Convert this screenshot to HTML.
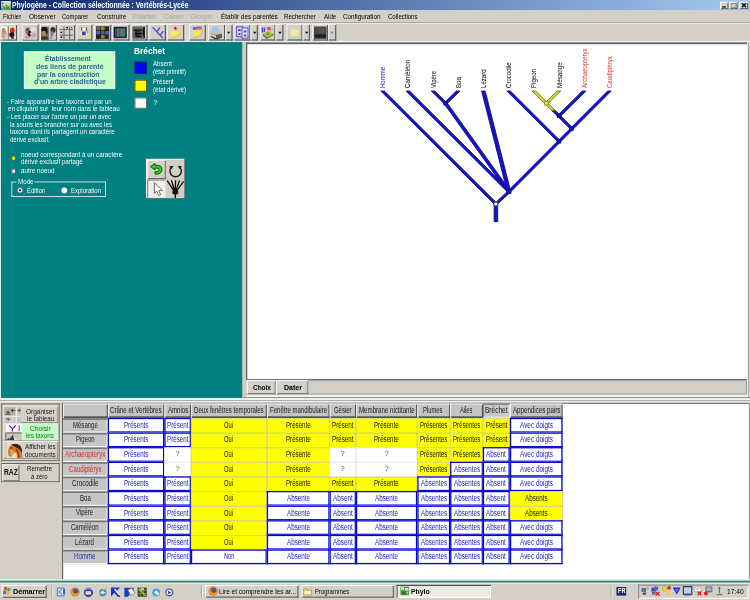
<!DOCTYPE html>
<html><head><meta charset="utf-8"><title>Phylogene</title>
<style>
html,body{margin:0;padding:0;}
body{width:750px;height:600px;overflow:hidden;position:relative;background:#d4d0c8;font-family:"Liberation Sans", sans-serif;}
div,span.t,svg{position:absolute;box-sizing:border-box;}
span.t{white-space:pre;display:block;}
</style></head><body><div id="root" style="left:0;top:0;width:750px;height:600px;will-change:transform;">
<svg style="left:0;top:0" width="0" height="0"><defs><linearGradient id="g0" x1="0" x2="1" y1="0" y2="0"><stop offset="0" stop-color="#0a246a"/><stop offset="1" stop-color="#a6caf0"/></linearGradient></defs></svg>
<svg style="left:0;top:0" width="0" height="0"><defs><filter id="bl" x="-10%" y="-10%" width="120%" height="120%"><feGaussianBlur stdDeviation="0.45"/></filter><filter id="bl2"><feGaussianBlur stdDeviation="0.25"/></filter></defs></svg>
<svg style="left:0;top:0" width="750" height="600" viewBox="0 0 750 600"><rect x="0.00" y="0.00" width="750.00" height="10.20" fill="url(#g0)"/></svg>
<svg style="left:1px;top:0.6px" width="9.8" height="9.6" viewBox="0 0 9.8 9.6"><g filter="url(#bl2)"><rect width="9.8" height="9.6" fill="#b4d4a4"/><rect x="0" y="0" width="9.8" height="2" fill="#d4e4cc"/><rect x="0.8" y="1.4" width="1.6" height="1.4" fill="#6c5c48"/><rect x="3" y="2.6" width="2.4" height="1.6" fill="#e4f0dc"/><rect x="4.6" y="3.6" width="1.6" height="1.6" fill="#7c6c3c"/><rect x="1" y="4.6" width="2.2" height="1.4" fill="#8c9c6c"/><rect x="6" y="2" width="3" height="2" fill="#cce0c0"/><rect x="0" y="6.8" width="9.8" height="2.8" fill="#58b04c"/><rect x="5" y="5.4" width="3.6" height="3" fill="#3c9838"/><rect x="2.6" y="6" width="1.6" height="1.6" fill="#6c6428"/></g></svg>
<span class="t" style="left:11.70px;top:0.58px;font-size:8.2px;line-height:9.84px;color:#fff;font-weight:bold;transform-origin:0 0;transform:scaleX(0.8390);">Phylogène - Collection sélectionnée : Vertébrés-Lycée</span>
<svg style="left:0;top:0" width="750" height="600" viewBox="0 0 750 600"><rect x="720.00" y="1.80" width="8.40" height="7.30" fill="#d4d0c8"/><rect x="727.50" y="1.80" width="0.90" height="7.30" fill="#50504c"/><rect x="720.00" y="8.20" width="8.40" height="0.90" fill="#50504c"/><rect x="720.00" y="1.80" width="0.90" height="7.30" fill="#fbfbf9"/><rect x="720.00" y="1.80" width="8.40" height="0.90" fill="#fbfbf9"/><rect x="729.30" y="1.80" width="8.20" height="7.30" fill="#d4d0c8"/><rect x="736.60" y="1.80" width="0.90" height="7.30" fill="#50504c"/><rect x="729.30" y="8.20" width="8.20" height="0.90" fill="#50504c"/><rect x="729.30" y="1.80" width="0.90" height="7.30" fill="#fbfbf9"/><rect x="729.30" y="1.80" width="8.20" height="0.90" fill="#fbfbf9"/><rect x="739.30" y="1.80" width="8.80" height="7.30" fill="#d4d0c8"/><rect x="747.20" y="1.80" width="0.90" height="7.30" fill="#50504c"/><rect x="739.30" y="8.20" width="8.80" height="0.90" fill="#50504c"/><rect x="739.30" y="1.80" width="0.90" height="7.30" fill="#fbfbf9"/><rect x="739.30" y="1.80" width="8.80" height="0.90" fill="#fbfbf9"/></svg>
<svg style="left:720px;top:1.8px" width="30" height="7.3" viewBox="0 0 30 7.3"><rect x="2.3" y="4.3" width="3.5" height="1.3" fill="#101010"/><rect x="11.4" y="1.5" width="4.6" height="3.9" fill="none" stroke="#8c8a84" stroke-width="0.8"/><rect x="11" y="1.1" width="5.4" height="1" fill="#8c8a84"/><path d="M21.9 1.2 L26.1 5.2 M26.1 1.2 L21.9 5.2" stroke="#080808" stroke-width="1.35"/></svg>
<svg style="left:0;top:0" width="750" height="600" viewBox="0 0 750 600"><rect x="0.00" y="10.20" width="750.00" height="12.30" fill="#d4d0c8"/></svg>
<span class="t" style="left:2.70px;top:12.10px;font-size:8.0px;line-height:9.60px;color:#000;font-weight:normal;transform-origin:0 0;transform:scaleX(0.7578);">Fichier</span>
<span class="t" style="left:28.60px;top:12.10px;font-size:8.0px;line-height:9.60px;color:#000;font-weight:normal;transform-origin:0 0;transform:scaleX(0.8084);">Observer</span>
<span class="t" style="left:62.30px;top:12.10px;font-size:8.0px;line-height:9.60px;color:#000;font-weight:normal;transform-origin:0 0;transform:scaleX(0.7364);">Comparer</span>
<span class="t" style="left:96.60px;top:12.10px;font-size:8.0px;line-height:9.60px;color:#000;font-weight:normal;transform-origin:0 0;transform:scaleX(0.7912);">Construire</span>
<span class="t" style="left:132.70px;top:12.10px;font-size:8.0px;line-height:9.60px;color:#a8a49c;font-weight:normal;transform-origin:0 0;transform:scaleX(0.7474);">Polariser</span>
<span class="t" style="left:164.00px;top:12.10px;font-size:8.0px;line-height:9.60px;color:#a8a49c;font-weight:normal;transform-origin:0 0;transform:scaleX(0.7226);">Classer</span>
<span class="t" style="left:191.00px;top:12.10px;font-size:8.0px;line-height:9.60px;color:#a8a49c;font-weight:normal;transform-origin:0 0;transform:scaleX(0.7425);">Grouper</span>
<span class="t" style="left:220.60px;top:12.10px;font-size:8.0px;line-height:9.60px;color:#000;font-weight:normal;transform-origin:0 0;transform:scaleX(0.7982);">Établir des parentés</span>
<span class="t" style="left:284.30px;top:12.10px;font-size:8.0px;line-height:9.60px;color:#000;font-weight:normal;transform-origin:0 0;transform:scaleX(0.7689);">Rechercher</span>
<span class="t" style="left:324.00px;top:12.10px;font-size:8.0px;line-height:9.60px;color:#000;font-weight:normal;transform-origin:0 0;transform:scaleX(0.7618);">Aide</span>
<span class="t" style="left:343.30px;top:12.10px;font-size:8.0px;line-height:9.60px;color:#000;font-weight:normal;transform-origin:0 0;transform:scaleX(0.7879);">Configuration</span>
<span class="t" style="left:388.30px;top:12.10px;font-size:8.0px;line-height:9.60px;color:#000;font-weight:normal;transform-origin:0 0;transform:scaleX(0.7537);">Collections</span>
<svg style="left:0;top:0" width="750" height="600" viewBox="0 0 750 600"><rect x="0.00" y="22.30" width="750.00" height="0.70" fill="#9c988f"/><rect x="0.00" y="23.00" width="750.00" height="0.70" fill="#fff"/><rect x="0.00" y="23.70" width="750.00" height="17.00" fill="#d4d0c8"/><rect x="0.00" y="40.70" width="750.00" height="1.30" fill="#e4f2f0"/><rect x="0.40" y="24.00" width="16.60" height="16.60" fill="#d4d0c8"/><rect x="15.80" y="24.00" width="1.20" height="16.60" fill="#585c62"/><rect x="0.40" y="39.40" width="16.60" height="1.20" fill="#585c62"/><rect x="0.40" y="24.00" width="1.00" height="16.60" fill="#f1f0ec"/><rect x="0.40" y="24.00" width="16.60" height="1.00" fill="#f1f0ec"/></svg>
<svg style="left:0.4px;top:24px" width="16.6" height="16.6" viewBox="0 0 16.6 16.6"><g transform="translate(0,1.1)"><g filter="url(#bl)"><rect x="0.8" y="1.2" width="7" height="13" fill="#efe9e2"/><ellipse cx="4" cy="9.4" rx="2.6" ry="4.6" fill="#bea07c"/><ellipse cx="3.6" cy="5" rx="1.8" ry="2.2" fill="#a8906c"/><ellipse cx="5.4" cy="11.6" rx="1.4" ry="2.4" fill="#d8c4a4"/><rect x="8.8" y="1.2" width="6.8" height="13" fill="#ece6e2"/><ellipse cx="12.4" cy="5.4" rx="2.4" ry="3" fill="#d82c14"/><ellipse cx="11.8" cy="9.6" rx="2.6" ry="2.4" fill="#281014"/><ellipse cx="12.4" cy="12.6" rx="1.6" ry="1.4" fill="#5a3430"/></g><rect x="7.8" y="1.2" width="0.9" height="13.6" fill="#70686a"/></g></svg>
<svg style="left:0;top:0" width="750" height="600" viewBox="0 0 750 600"><rect x="21.80" y="24.00" width="16.80" height="16.60" fill="#d4d0c8"/><rect x="37.40" y="24.00" width="1.20" height="16.60" fill="#585c62"/><rect x="21.80" y="39.40" width="16.80" height="1.20" fill="#585c62"/><rect x="21.80" y="24.00" width="1.00" height="16.60" fill="#f1f0ec"/><rect x="21.80" y="24.00" width="16.80" height="1.00" fill="#f1f0ec"/></svg>
<svg style="left:21.8px;top:24px" width="16.8" height="16.6" viewBox="0 0 16.8 16.6"><g transform="translate(0,1.1)"><g filter="url(#bl)"><rect x="1.6" y="1.2" width="13.6" height="13.4" fill="#d9c8c8"/><ellipse cx="6.4" cy="6" rx="3.2" ry="3.6" fill="#9a7a80"/><ellipse cx="11" cy="4.4" rx="3" ry="2" fill="#e8dcdc"/><ellipse cx="7.4" cy="8.6" rx="1.7" ry="3" fill="#2e1c24"/><ellipse cx="5.4" cy="4.4" rx="1.4" ry="1.4" fill="#5a3c44"/><ellipse cx="11.4" cy="10" rx="3" ry="2.6" fill="#c8acac"/><ellipse cx="5" cy="12" rx="2.4" ry="1.6" fill="#b89ca0"/><circle cx="8.9" cy="8.4" r="0.8" fill="#ffffff"/></g></g></svg>
<svg style="left:0;top:0" width="750" height="600" viewBox="0 0 750 600"><rect x="40.00" y="24.00" width="17.00" height="16.60" fill="#d4d0c8"/><rect x="55.80" y="24.00" width="1.20" height="16.60" fill="#585c62"/><rect x="40.00" y="39.40" width="17.00" height="1.20" fill="#585c62"/><rect x="40.00" y="24.00" width="1.00" height="16.60" fill="#f1f0ec"/><rect x="40.00" y="24.00" width="17.00" height="1.00" fill="#f1f0ec"/></svg>
<svg style="left:40px;top:24px" width="17" height="16.6" viewBox="0 0 17 16.6"><g transform="translate(0,1.1)"><g filter="url(#bl)"><rect x="1.2" y="1.6" width="6.6" height="13" fill="#6a6040"/><ellipse cx="4.4" cy="4.4" rx="3" ry="2.4" fill="#14140c"/><ellipse cx="4.2" cy="8.4" rx="2" ry="2.8" fill="#a89468"/><rect x="1.2" y="11.6" width="6.6" height="3" fill="#3a3420"/><ellipse cx="6.6" cy="6.6" rx="1" ry="2.6" fill="#1c180c"/><rect x="9" y="1.6" width="6.6" height="13" fill="#d4cccc"/><ellipse cx="13" cy="5" rx="2.6" ry="3" fill="#38303c"/><ellipse cx="12" cy="8.6" rx="1.8" ry="2.6" fill="#8c8088"/><ellipse cx="11" cy="12.6" rx="1.6" ry="1.6" fill="#a89ca0"/></g><rect x="7.9" y="1.6" width="0.9" height="13.2" fill="#70686a"/></g></svg>
<svg style="left:0;top:0" width="750" height="600" viewBox="0 0 750 600"><rect x="58.40" y="24.00" width="16.80" height="16.60" fill="#d4d0c8"/><rect x="74.00" y="24.00" width="1.20" height="16.60" fill="#585c62"/><rect x="58.40" y="39.40" width="16.80" height="1.20" fill="#585c62"/><rect x="58.40" y="24.00" width="1.00" height="16.60" fill="#f1f0ec"/><rect x="58.40" y="24.00" width="16.80" height="1.00" fill="#f1f0ec"/></svg>
<svg style="left:58.4px;top:24px" width="16.8" height="16.6" viewBox="0 0 16.8 16.6"><g transform="translate(0,1.1)"><g filter="url(#bl2)"><path d="M6 1.4 V14 M11.6 1.4 V14 M1.6 4.5 H15 M1.6 10.1 H15" stroke="#686868" stroke-width="1" fill="none"/><rect x="2.5" y="6.6" width="1.7" height="1.5" fill="#000"/><rect x="8.4" y="1.8" width="1.6" height="1.5" fill="#000"/><rect x="2.5" y="11.4" width="1.7" height="1.5" fill="#000"/><rect x="13" y="2" width="1.3" height="1.2" fill="#444"/></g></g></svg>
<svg style="left:0;top:0" width="750" height="600" viewBox="0 0 750 600"><rect x="76.40" y="24.00" width="16.00" height="16.60" fill="#d4d0c8"/><rect x="91.20" y="24.00" width="1.20" height="16.60" fill="#585c62"/><rect x="76.40" y="39.40" width="16.00" height="1.20" fill="#585c62"/><rect x="76.40" y="24.00" width="1.00" height="16.60" fill="#f1f0ec"/><rect x="76.40" y="24.00" width="16.00" height="1.00" fill="#f1f0ec"/></svg>
<svg style="left:76.4px;top:24px" width="16" height="16.6" viewBox="0 0 16 16.6"><g transform="translate(0,1.1)"><g filter="url(#bl2)"><path d="M2.8 9 L7 5 L13 7.4 L12.4 10.4 L7.4 13.2 Z" fill="#f2e6a4"/><path d="M2.8 9 L7.4 13.2 L12.4 10.4" stroke="#e0c850" stroke-width="0.8" fill="none"/><rect x="6" y="6.4" width="3.7" height="3.8" fill="#3c3ce4"/><rect x="5.3" y="2" width="0.9" height="3.6" fill="#505050"/><rect x="10" y="2" width="0.9" height="3.6" fill="#505050"/><rect x="6.8" y="3" width="2.4" height="2.4" fill="#fafafa"/><path d="M11 5 Q12.6 7 11.6 9" stroke="#707070" stroke-width="0.7" fill="none"/></g></g></svg>
<svg style="left:0;top:0" width="750" height="600" viewBox="0 0 750 600"><rect x="94.00" y="24.00" width="17.20" height="16.60" fill="#d4d0c8"/><rect x="110.00" y="24.00" width="1.20" height="16.60" fill="#585c62"/><rect x="94.00" y="39.40" width="17.20" height="1.20" fill="#585c62"/><rect x="94.00" y="24.00" width="1.00" height="16.60" fill="#f1f0ec"/><rect x="94.00" y="24.00" width="17.20" height="1.00" fill="#f1f0ec"/></svg>
<svg style="left:94px;top:24px" width="17.2" height="16.6" viewBox="0 0 17.2 16.6"><g transform="translate(0,1.1)"><g filter="url(#bl2)"><rect x="2" y="1.3" width="13.2" height="12.4" fill="#0c0c1c"/><rect x="2.3" y="1.6" width="3.9" height="3.6" fill="#6c5c74"/><rect x="6.8" y="1.6" width="3.9" height="3.6" fill="#90901c"/><rect x="11.3" y="1.6" width="3.6" height="3.6" fill="#34222c"/><rect x="2.3" y="5.8" width="3.9" height="3.6" fill="#5c5ca8"/><rect x="6.8" y="5.8" width="3.9" height="3.6" fill="#565a90"/><rect x="11.3" y="5.8" width="3.6" height="3.6" fill="#66668a"/><rect x="2.3" y="10" width="3.9" height="3.4" fill="#2a1a30"/><rect x="6.8" y="10" width="3.9" height="3.4" fill="#8c8c1c"/><rect x="11.3" y="10" width="3.6" height="3.4" fill="#40284c"/></g></g></svg>
<svg style="left:0;top:0" width="750" height="600" viewBox="0 0 750 600"><rect x="112.40" y="24.00" width="17.20" height="16.60" fill="#d4d0c8"/><rect x="128.40" y="24.00" width="1.20" height="16.60" fill="#585c62"/><rect x="112.40" y="39.40" width="17.20" height="1.20" fill="#585c62"/><rect x="112.40" y="24.00" width="1.00" height="16.60" fill="#f1f0ec"/><rect x="112.40" y="24.00" width="17.20" height="1.00" fill="#f1f0ec"/></svg>
<svg style="left:112.4px;top:24px" width="17.2" height="16.6" viewBox="0 0 17.2 16.6"><g transform="translate(0,1.1)"><g filter="url(#bl2)"><rect x="1.6" y="1.7" width="13.2" height="11.4" fill="#1c2438"/><rect x="4.6" y="3.3" width="2.8" height="8.2" fill="#62728e"/><rect x="7.6" y="3.3" width="5.6" height="8.2" fill="#4c7e5e"/><rect x="3" y="3.3" width="1" height="8.2" fill="#3a4660"/></g></g></svg>
<svg style="left:0;top:0" width="750" height="600" viewBox="0 0 750 600"><rect x="131.20" y="24.00" width="16.40" height="16.60" fill="#d4d0c8"/><rect x="146.40" y="24.00" width="1.20" height="16.60" fill="#585c62"/><rect x="131.20" y="39.40" width="16.40" height="1.20" fill="#585c62"/><rect x="131.20" y="24.00" width="1.00" height="16.60" fill="#f1f0ec"/><rect x="131.20" y="24.00" width="16.40" height="1.00" fill="#f1f0ec"/></svg>
<svg style="left:131.2px;top:24px" width="16.4" height="16.6" viewBox="0 0 16.4 16.6"><g transform="translate(0,1.1)"><g filter="url(#bl2)"><rect x="1.2" y="1.3" width="12.8" height="12.4" fill="#666666"/><path d="M2.6 5 H11.4 M4 8.6 H11 M5 5 V11.6 H10.6" stroke="#0c0c0c" stroke-width="1.2" fill="none"/><ellipse cx="7.4" cy="8.4" rx="2.2" ry="1.8" fill="none" stroke="#0c0c0c" stroke-width="1"/><path d="M12.6 2 Q10.8 7.6 13 13 L13.8 13 L13.8 2 Z" fill="#0c0c0c"/></g></g></svg>
<svg style="left:0;top:0" width="750" height="600" viewBox="0 0 750 600"><rect x="148.60" y="24.00" width="17.40" height="16.60" fill="#d4d0c8"/><rect x="164.80" y="24.00" width="1.20" height="16.60" fill="#585c62"/><rect x="148.60" y="39.40" width="17.40" height="1.20" fill="#585c62"/><rect x="148.60" y="24.00" width="1.00" height="16.60" fill="#f1f0ec"/><rect x="148.60" y="24.00" width="17.40" height="1.00" fill="#f1f0ec"/></svg>
<svg style="left:148.6px;top:24px" width="17.4" height="16.6" viewBox="0 0 17.4 16.6"><g transform="translate(0,1.1)"><g filter="url(#bl2)"><path d="M3.5 2 L13.9 13.2 M8.1 6.6 L11 2.2 M11 10 L14.5 6.2" stroke="#4846dc" stroke-width="1.25" fill="none"/></g></g></svg>
<svg style="left:0;top:0" width="750" height="600" viewBox="0 0 750 600"><rect x="166.80" y="24.00" width="17.40" height="16.60" fill="#d4d0c8"/><rect x="183.00" y="24.00" width="1.20" height="16.60" fill="#585c62"/><rect x="166.80" y="39.40" width="17.40" height="1.20" fill="#585c62"/><rect x="166.80" y="24.00" width="1.00" height="16.60" fill="#f1f0ec"/><rect x="166.80" y="24.00" width="17.40" height="1.00" fill="#f1f0ec"/></svg>
<svg style="left:166.8px;top:24px" width="17.4" height="16.6" viewBox="0 0 17.4 16.6"><g transform="translate(0,1.1)"><g filter="url(#bl)"><path d="M3.4 6.6 L6.4 4.4 L8.4 6.2 L12.6 5.8 L14 4.4 L13.6 8 L11 11 L5 12.4 L3.6 11 Z" fill="#f5e85c"/><path d="M5 12.4 L11 11 L13.6 8" stroke="#c8b030" stroke-width="0.7" fill="none"/><ellipse cx="8.3" cy="3" rx="1.3" ry="1.7" fill="#b02828"/><ellipse cx="8" cy="0.6" rx="1.4" ry="1" fill="#f0b8c8"/><ellipse cx="9" cy="4.2" rx="0.9" ry="0.9" fill="#e05030"/></g></g></svg>
<svg style="left:0;top:0" width="750" height="600" viewBox="0 0 750 600"><rect x="189.10" y="24.00" width="16.80" height="16.60" fill="#d4d0c8"/><rect x="204.70" y="24.00" width="1.20" height="16.60" fill="#585c62"/><rect x="189.10" y="39.40" width="16.80" height="1.20" fill="#585c62"/><rect x="189.10" y="24.00" width="1.00" height="16.60" fill="#f1f0ec"/><rect x="189.10" y="24.00" width="16.80" height="1.00" fill="#f1f0ec"/></svg>
<svg style="left:189.1px;top:24px" width="16.8" height="16.6" viewBox="0 0 16.8 16.6"><g transform="translate(0,1.1)"><g filter="url(#bl)"><path d="M3.8 1.8 L12.6 1.4 L12.8 4.6 L4 5 Z" fill="#5c64e0"/><path d="M7.4 3 L12.6 2.6 L12.8 5.4 L7.8 5.8 Z" fill="#f06868"/><path d="M3.6 5 L7 4.6 L13.8 4.6 L12 10.4 L4.4 12.6 Z" fill="#f6e458"/><path d="M4.4 12.6 L12 10.4 L13.8 4.6" stroke="#b8a028" stroke-width="0.6" fill="none"/></g></g></svg>
<svg style="left:0;top:0" width="750" height="600" viewBox="0 0 750 600"><rect x="207.90" y="24.00" width="17.30" height="16.60" fill="#d4d0c8"/><rect x="224.00" y="24.00" width="1.20" height="16.60" fill="#585c62"/><rect x="207.90" y="39.40" width="17.30" height="1.20" fill="#585c62"/><rect x="207.90" y="24.00" width="1.00" height="16.60" fill="#f1f0ec"/><rect x="207.90" y="24.00" width="17.30" height="1.00" fill="#f1f0ec"/></svg>
<svg style="left:207.9px;top:24px" width="17.3" height="16.6" viewBox="0 0 17.3 16.6"><g transform="translate(0,1.1)"><g filter="url(#bl)"><path d="M4.4 1.8 L9.6 1.6 L11 6.4 L3.6 6.8 Z" fill="#a4c4f0"/><path d="M2.4 7.2 L12 6 L14.6 8.6 L14 11.4 L8 13.8 L2.6 10.8 Z" fill="#c4c4c4"/><path d="M2.6 10.6 L8 13.2 L14.2 10.8 L14 12.4 L8 14.6 L2.8 12 Z" fill="#383838"/><path d="M8 9.6 L14 8.6 L14 11 L8 13.2 Z" fill="#5c5c5c"/><path d="M3.6 8.8 L8 9.8" stroke="#888" stroke-width="0.7" fill="none"/></g></g></svg>
<svg style="left:0;top:0" width="750" height="600" viewBox="0 0 750 600"><rect x="225.20" y="24.00" width="7.40" height="16.60" fill="#d4d0c8"/><rect x="231.40" y="24.00" width="1.20" height="16.60" fill="#585c62"/><rect x="225.20" y="39.40" width="7.40" height="1.20" fill="#585c62"/><rect x="225.20" y="24.00" width="1.00" height="16.60" fill="#f1f0ec"/><rect x="225.20" y="24.00" width="7.40" height="1.00" fill="#f1f0ec"/></svg>
<svg style="left:225.2px;top:24px" width="7.4" height="16.6" viewBox="0 0 7.4 16.6"><path d="M2.0 7.8 h3.4 l-1.7 2.1 z" fill="#000"/></svg>
<svg style="left:0;top:0" width="750" height="600" viewBox="0 0 750 600"><rect x="233.70" y="24.00" width="16.80" height="16.60" fill="#d4d0c8"/><rect x="249.30" y="24.00" width="1.20" height="16.60" fill="#585c62"/><rect x="233.70" y="39.40" width="16.80" height="1.20" fill="#585c62"/><rect x="233.70" y="24.00" width="1.00" height="16.60" fill="#f1f0ec"/><rect x="233.70" y="24.00" width="16.80" height="1.00" fill="#f1f0ec"/></svg>
<svg style="left:233.7px;top:24px" width="16.8" height="16.6" viewBox="0 0 16.8 16.6"><g transform="translate(0,1.1)"><g filter="url(#bl2)"><rect x="2.6" y="1.6" width="6.2" height="10" fill="#dcdcfa" stroke="#5a60ec" stroke-width="1.1"/><rect x="8" y="2.8" width="6" height="10.4" fill="#e4e4fa" stroke="#5a60ec" stroke-width="1.1"/><rect x="4.2" y="4.2" width="2.4" height="1.8" fill="#404040"/><rect x="4.2" y="8" width="2.4" height="1.8" fill="#585858"/><rect x="9.8" y="5.4" width="2.6" height="2" fill="#505850"/><rect x="9.8" y="9.4" width="2.6" height="2" fill="#606860"/></g></g></svg>
<svg style="left:0;top:0" width="750" height="600" viewBox="0 0 750 600"><rect x="250.50" y="24.00" width="7.40" height="16.60" fill="#d4d0c8"/><rect x="256.70" y="24.00" width="1.20" height="16.60" fill="#585c62"/><rect x="250.50" y="39.40" width="7.40" height="1.20" fill="#585c62"/><rect x="250.50" y="24.00" width="1.00" height="16.60" fill="#f1f0ec"/><rect x="250.50" y="24.00" width="7.40" height="1.00" fill="#f1f0ec"/></svg>
<svg style="left:250.5px;top:24px" width="7.4" height="16.6" viewBox="0 0 7.4 16.6"><path d="M2.0 7.8 h3.4 l-1.7 2.1 z" fill="#000"/></svg>
<svg style="left:0;top:0" width="750" height="600" viewBox="0 0 750 600"><rect x="260.00" y="24.00" width="15.50" height="16.60" fill="#d4d0c8"/><rect x="274.30" y="24.00" width="1.20" height="16.60" fill="#585c62"/><rect x="260.00" y="39.40" width="15.50" height="1.20" fill="#585c62"/><rect x="260.00" y="24.00" width="1.00" height="16.60" fill="#f1f0ec"/><rect x="260.00" y="24.00" width="15.50" height="1.00" fill="#f1f0ec"/></svg>
<svg style="left:260px;top:24px" width="15.5" height="16.6" viewBox="0 0 15.5 16.6"><g transform="translate(0,1.1)"><g filter="url(#bl2)"><path d="M3 9 L9.4 5.6 L13.6 8.6 L7 12.4 Z" fill="#c4c044"/><path d="M3 9 L7 12.4 L7 13.8 L3 10.4 Z" fill="#5c5410"/><path d="M7 12.4 L13.6 8.6 L13.6 10 L7 13.8 Z" fill="#7c7418"/><rect x="1.8" y="2.4" width="1.4" height="4.8" fill="#3434d4"/><rect x="3.8" y="2.4" width="1.4" height="4.8" fill="#4c4ce4"/><path d="M6.6 2.2 L10.4 1.6 L11.4 4.8 L7.6 5.4 Z" fill="#e45444"/><rect x="6.2" y="7.4" width="3" height="2.4" fill="#44a444"/><path d="M10.4 3 L13.4 5.6" stroke="#f4a4b4" stroke-width="1.1"/><path d="M11.6 2.4 L13.6 4" stroke="#a0a0f0" stroke-width="0.8"/></g></g></svg>
<svg style="left:0;top:0" width="750" height="600" viewBox="0 0 750 600"><rect x="275.50" y="24.00" width="8.00" height="16.60" fill="#d4d0c8"/><rect x="282.30" y="24.00" width="1.20" height="16.60" fill="#585c62"/><rect x="275.50" y="39.40" width="8.00" height="1.20" fill="#585c62"/><rect x="275.50" y="24.00" width="1.00" height="16.60" fill="#f1f0ec"/><rect x="275.50" y="24.00" width="8.00" height="1.00" fill="#f1f0ec"/></svg>
<svg style="left:275.5px;top:24px" width="8" height="16.6" viewBox="0 0 8 16.6"><path d="M2.3 7.8 h3.4 l-1.7 2.1 z" fill="#000"/></svg>
<svg style="left:0;top:0" width="750" height="600" viewBox="0 0 750 600"><rect x="286.50" y="24.00" width="16.10" height="16.60" fill="#d4d0c8"/><rect x="301.40" y="24.00" width="1.20" height="16.60" fill="#585c62"/><rect x="286.50" y="39.40" width="16.10" height="1.20" fill="#585c62"/><rect x="286.50" y="24.00" width="1.00" height="16.60" fill="#f1f0ec"/><rect x="286.50" y="24.00" width="16.10" height="1.00" fill="#f1f0ec"/></svg>
<svg style="left:286.5px;top:24px" width="16.1" height="16.6" viewBox="0 0 16.1 16.6"><g transform="translate(0,1.1)"><g filter="url(#bl)"><path d="M3.6 5 L7 3.2 L8.8 4.6 L12.6 4.2 L12.8 10.6 L4.2 12 Z" fill="#f2eaa0"/><path d="M4.2 12 L12.8 10.6 L12.6 4.2" stroke="#d4c878" stroke-width="0.6" fill="none"/></g></g></svg>
<svg style="left:0;top:0" width="750" height="600" viewBox="0 0 750 600"><rect x="302.60" y="24.00" width="7.40" height="16.60" fill="#d4d0c8"/><rect x="308.80" y="24.00" width="1.20" height="16.60" fill="#585c62"/><rect x="302.60" y="39.40" width="7.40" height="1.20" fill="#585c62"/><rect x="302.60" y="24.00" width="1.00" height="16.60" fill="#f1f0ec"/><rect x="302.60" y="24.00" width="7.40" height="1.00" fill="#f1f0ec"/></svg>
<svg style="left:302.6px;top:24px" width="7.4" height="16.6" viewBox="0 0 7.4 16.6"><path d="M2.0 7.8 h3.4 l-1.7 2.1 z" fill="#000"/></svg>
<svg style="left:0;top:0" width="750" height="600" viewBox="0 0 750 600"><rect x="312.10" y="24.00" width="16.10" height="16.60" fill="#d4d0c8"/><rect x="327.00" y="24.00" width="1.20" height="16.60" fill="#585c62"/><rect x="312.10" y="39.40" width="16.10" height="1.20" fill="#585c62"/><rect x="312.10" y="24.00" width="1.00" height="16.60" fill="#f1f0ec"/><rect x="312.10" y="24.00" width="16.10" height="1.00" fill="#f1f0ec"/></svg>
<svg style="left:312.1px;top:24px" width="16.1" height="16.6" viewBox="0 0 16.1 16.6"><g transform="translate(0,1.1)"><g filter="url(#bl2)"><rect x="2" y="1.4" width="12.6" height="12.4" fill="#4a4a4a"/><rect x="7" y="3" width="5.4" height="5" fill="#5c5c5c"/><path d="M8 3 V8 M10 3 V8" stroke="#484848" stroke-width="0.6"/><rect x="2.8" y="9.4" width="11" height="3" fill="#141414"/><path d="M3.6 10.9 H13" stroke="#4a4a4a" stroke-width="0.5" stroke-dasharray="1.4 0.8"/></g></g></svg>
<svg style="left:0;top:0" width="750" height="600" viewBox="0 0 750 600"><rect x="328.20" y="24.00" width="8.10" height="16.60" fill="#d4d0c8"/><rect x="335.10" y="24.00" width="1.20" height="16.60" fill="#585c62"/><rect x="328.20" y="39.40" width="8.10" height="1.20" fill="#585c62"/><rect x="328.20" y="24.00" width="1.00" height="16.60" fill="#f1f0ec"/><rect x="328.20" y="24.00" width="8.10" height="1.00" fill="#f1f0ec"/></svg>
<svg style="left:328.2px;top:24px" width="8.1" height="16.6" viewBox="0 0 8.1 16.6"><path d="M2.3499999999999996 7.8 h3.4 l-1.7 2.1 z" fill="#908c84"/></svg>
<svg style="left:0;top:0" width="750" height="600" viewBox="0 0 750 600"><rect x="18.20" y="25.00" width="1.00" height="14.60" fill="#ecebe6"/><rect x="185.20" y="25.00" width="3.20" height="14.80" fill="#dcd9d2"/><rect x="0.00" y="42.00" width="1.00" height="356.00" fill="#d8eeec"/><rect x="1.00" y="42.00" width="241.50" height="355.90" fill="#008080"/><rect x="23.70" y="51.10" width="91.80" height="38.00" fill="#80c0c0"/><rect x="24.20" y="51.60" width="90.80" height="37.00" fill="#c6fcc6"/><rect x="24.20" y="51.60" width="1.00" height="37.00" fill="#e4ffe8"/><rect x="114.00" y="51.60" width="1.00" height="37.00" fill="#e4ffe8"/><rect x="24.20" y="51.60" width="90.80" height="1.00" fill="#e4ffe8"/><rect x="24.20" y="87.60" width="90.80" height="1.00" fill="#e4ffe8"/></svg>
<span class="t" style="left:45.20px;top:54.32px;font-size:7.8px;line-height:9.36px;color:#2f6690;font-weight:bold;transform-origin:0 0;transform:scaleX(0.8662);">Établissement</span>
<span class="t" style="left:35.80px;top:62.12px;font-size:7.8px;line-height:9.36px;color:#2f6690;font-weight:bold;transform-origin:0 0;transform:scaleX(0.9017);">des liens de parenté</span>
<span class="t" style="left:37.00px;top:69.62px;font-size:7.8px;line-height:9.36px;color:#2f6690;font-weight:bold;transform-origin:0 0;transform:scaleX(0.8919);">par la construction</span>
<span class="t" style="left:33.60px;top:77.22px;font-size:7.8px;line-height:9.36px;color:#2f6690;font-weight:bold;transform-origin:0 0;transform:scaleX(0.8895);">d'un arbre cladistique</span>
<span class="t" style="left:6.60px;top:97.12px;font-size:7.8px;line-height:9.36px;color:#f4fafa;font-weight:normal;transform-origin:0 0;transform:scaleX(0.7902);">- Faire apparaître les taxons un par un</span>
<span class="t" style="left:8.40px;top:104.22px;font-size:7.8px;line-height:9.36px;color:#f4fafa;font-weight:normal;transform-origin:0 0;transform:scaleX(0.7947);">en cliquant sur  leur nom dans le tableau</span>
<span class="t" style="left:6.60px;top:112.12px;font-size:7.8px;line-height:9.36px;color:#f4fafa;font-weight:normal;transform-origin:0 0;transform:scaleX(0.7949);">- Les placer sur l'arbre un par un avec</span>
<span class="t" style="left:10.00px;top:119.62px;font-size:7.8px;line-height:9.36px;color:#f4fafa;font-weight:normal;transform-origin:0 0;transform:scaleX(0.7924);">la souris les brancher sur ou avec les</span>
<span class="t" style="left:10.00px;top:127.22px;font-size:7.8px;line-height:9.36px;color:#f4fafa;font-weight:normal;transform-origin:0 0;transform:scaleX(0.8033);">taxons dont ils partagent un caractère</span>
<span class="t" style="left:10.00px;top:134.82px;font-size:7.8px;line-height:9.36px;color:#f4fafa;font-weight:normal;transform-origin:0 0;transform:scaleX(0.7716);">dérivé exclusif.</span>
<svg style="left:0;top:0" width="750" height="600" viewBox="0 0 750 600"><rect x="11.40" y="155.80" width="4.60" height="4.80" fill="#f0f000"/><rect x="11.40" y="155.80" width="0.80" height="4.80" fill="#304848"/><rect x="15.20" y="155.80" width="0.80" height="4.80" fill="#304848"/><rect x="11.40" y="155.80" width="4.60" height="0.80" fill="#304848"/><rect x="11.40" y="159.80" width="4.60" height="0.80" fill="#304848"/></svg>
<span class="t" style="left:20.80px;top:149.92px;font-size:7.8px;line-height:9.36px;color:#f4fafa;font-weight:normal;transform-origin:0 0;transform:scaleX(0.8051);">noeud correspondant à un caractère</span>
<span class="t" style="left:20.80px;top:157.22px;font-size:7.8px;line-height:9.36px;color:#f4fafa;font-weight:normal;transform-origin:0 0;transform:scaleX(0.7921);">dérivé exclusif partagé</span>
<svg style="left:0;top:0" width="750" height="600" viewBox="0 0 750 600"><rect x="11.40" y="168.80" width="4.60" height="4.80" fill="#ffffff"/><rect x="11.40" y="168.80" width="0.80" height="4.80" fill="#304848"/><rect x="15.20" y="168.80" width="0.80" height="4.80" fill="#304848"/><rect x="11.40" y="168.80" width="4.60" height="0.80" fill="#304848"/><rect x="11.40" y="172.80" width="4.60" height="0.80" fill="#304848"/></svg>
<span class="t" style="left:20.80px;top:165.92px;font-size:7.8px;line-height:9.36px;color:#f4fafa;font-weight:normal;transform-origin:0 0;transform:scaleX(0.8024);">autre noeud</span>
<svg style="left:0;top:0" width="750" height="600" viewBox="0 0 750 600"><rect x="11.40" y="181.50" width="0.90" height="15.40" fill="#d6ecec"/><rect x="105.10" y="181.50" width="0.90" height="15.40" fill="#d6ecec"/><rect x="11.40" y="181.50" width="94.60" height="0.90" fill="#d6ecec"/><rect x="11.40" y="196.00" width="94.60" height="0.90" fill="#d6ecec"/><rect x="16.60" y="180.00" width="17.60" height="4.00" fill="#008080"/></svg>
<span class="t" style="left:17.60px;top:177.12px;font-size:7.8px;line-height:9.36px;color:#f4fafa;font-weight:normal;transform-origin:0 0;transform:scaleX(0.7994);">Mode</span>
<svg style="left:16px;top:186px" width="60" height="9" viewBox="0 0 60 9"><circle cx="4.1" cy="4.3" r="2.7" fill="#fff" stroke="#506060" stroke-width="0.7"/><circle cx="4.1" cy="4.3" r="1.1" fill="#200000"/><circle cx="48.3" cy="4.4" r="2.8" fill="#fff" stroke="#c8d8d8" stroke-width="0.5"/></svg>
<span class="t" style="left:26.70px;top:185.52px;font-size:7.8px;line-height:9.36px;color:#f4fafa;font-weight:normal;transform-origin:0 0;transform:scaleX(0.7717);">Édition</span>
<span class="t" style="left:70.80px;top:185.52px;font-size:7.8px;line-height:9.36px;color:#f4fafa;font-weight:normal;transform-origin:0 0;transform:scaleX(0.7689);">Exploration</span>
<span class="t" style="left:133.80px;top:46.36px;font-size:8.4px;line-height:10.08px;color:#fff;font-weight:bold;transform-origin:0 0;transform:scaleX(0.9940);">Bréchet</span>
<svg style="left:0;top:0" width="750" height="600" viewBox="0 0 750 600"><rect x="134.60" y="61.80" width="12.40" height="12.20" fill="#0000ff"/><rect x="134.60" y="61.80" width="0.80" height="12.20" fill="#103838"/><rect x="146.20" y="61.80" width="0.80" height="12.20" fill="#103838"/><rect x="134.60" y="61.80" width="12.40" height="0.80" fill="#103838"/><rect x="134.60" y="73.20" width="12.40" height="0.80" fill="#103838"/></svg>
<span class="t" style="left:152.60px;top:59.12px;font-size:7.8px;line-height:9.36px;color:#f4fafa;font-weight:normal;transform-origin:0 0;transform:scaleX(0.7825);">Absent</span>
<span class="t" style="left:152.60px;top:66.92px;font-size:7.8px;line-height:9.36px;color:#f4fafa;font-weight:normal;transform-origin:0 0;transform:scaleX(0.7616);">(état primitif)</span>
<svg style="left:0;top:0" width="750" height="600" viewBox="0 0 750 600"><rect x="134.60" y="79.80" width="12.40" height="11.80" fill="#ffff00"/><rect x="134.60" y="79.80" width="0.80" height="11.80" fill="#304020"/><rect x="146.20" y="79.80" width="0.80" height="11.80" fill="#304020"/><rect x="134.60" y="79.80" width="12.40" height="0.80" fill="#304020"/><rect x="134.60" y="90.80" width="12.40" height="0.80" fill="#304020"/></svg>
<span class="t" style="left:152.60px;top:77.02px;font-size:7.8px;line-height:9.36px;color:#f4fafa;font-weight:normal;transform-origin:0 0;transform:scaleX(0.7740);">Présent</span>
<span class="t" style="left:152.60px;top:84.82px;font-size:7.8px;line-height:9.36px;color:#f4fafa;font-weight:normal;transform-origin:0 0;transform:scaleX(0.7931);">(état dérivé)</span>
<svg style="left:0;top:0" width="750" height="600" viewBox="0 0 750 600"><rect x="134.60" y="97.60" width="12.40" height="11.00" fill="#ffffff"/><rect x="134.60" y="97.60" width="0.80" height="11.00" fill="#305858"/><rect x="146.20" y="97.60" width="0.80" height="11.00" fill="#305858"/><rect x="134.60" y="97.60" width="12.40" height="0.80" fill="#305858"/><rect x="134.60" y="107.80" width="12.40" height="0.80" fill="#305858"/></svg>
<span class="t" style="left:153.20px;top:98.12px;font-size:7.8px;line-height:9.36px;color:#f4fafa;font-weight:normal;transform-origin:0 0;transform:scaleX(1.0000);">?</span>
<svg style="left:0;top:0" width="750" height="600" viewBox="0 0 750 600"><rect x="146.00" y="158.80" width="38.80" height="39.60" fill="#8e8a82"/><rect x="146.00" y="158.80" width="38.00" height="38.80" fill="#f6f6f2"/><rect x="147.00" y="159.80" width="37.00" height="37.80" fill="#d2cec6"/><rect x="147.00" y="159.80" width="18.80" height="19.20" fill="#d4d0c8"/><rect x="164.80" y="159.80" width="1.00" height="19.20" fill="#6c6860"/><rect x="147.00" y="178.00" width="18.80" height="1.00" fill="#6c6860"/><rect x="147.00" y="159.80" width="1.00" height="19.20" fill="#f4f4f0"/><rect x="147.00" y="159.80" width="18.80" height="1.00" fill="#f4f4f0"/><rect x="147.00" y="179.40" width="18.60" height="18.20" fill="#efeeea"/><rect x="147.00" y="179.40" width="1.20" height="18.20" fill="#8a8680"/><rect x="147.00" y="179.40" width="18.60" height="1.20" fill="#8a8680"/></svg>
<svg style="left:146px;top:158.8px" width="39" height="40" viewBox="0 0 39 40"><path d="M4.4 7.6 L9 4.4 L9 6.4 L12.4 6.4 Q16 6.8 16 10 Q16 14.6 11.4 15.2 L9 15.2 L9 12.6 L11.2 12.6 Q13 12.4 13 10.6 Q13 9.2 11.6 9.2 L9 9.2 L9 11 Z" fill="#18d818" stroke="#0a480a" stroke-width="0.9"/><path d="M25.2 8.4 A5.7 5.7 0 1 0 34 8.4" fill="none" stroke="#161616" stroke-width="1.4"/><path d="M23 7.4 L27.4 6.8 L25.8 10 Z M36.2 7.4 L31.8 6.8 L33.4 10 Z" fill="#161616"/><path d="M8.4 23.6 L8.4 34.4 L10.8 32.2 L12.6 36.4 L14.6 35.6 L12.8 31.6 L16.2 31.4 Z" fill="#fff" stroke="#4a4a4a" stroke-width="0.8"/><path d="M21.2 21.6 L28.4 32.6 M25.4 21.2 L28.6 32 M29.6 21.2 L29.2 32 M33.6 21.4 L29.8 32 M37.6 22.4 L30.2 32.6 M29.3 33 L29.3 39" stroke="#0c0c0c" stroke-width="1.3" fill="none"/><ellipse cx="29.3" cy="33.2" rx="3" ry="2.3" fill="#0c0c0c"/></svg>
<svg style="left:0;top:0" width="750" height="600" viewBox="0 0 750 600"><rect x="242.50" y="42.00" width="3.60" height="356.20" fill="#cfccc5"/><rect x="246.00" y="42.40" width="501.00" height="337.00" fill="#ffffff"/><rect x="246.00" y="42.40" width="1.30" height="337.00" fill="#606060"/><rect x="246.00" y="42.40" width="501.00" height="1.80" fill="#646464"/><rect x="246.00" y="379.00" width="501.00" height="1.00" fill="#6e6e6e"/><rect x="246.00" y="380.00" width="501.00" height="14.20" fill="#d4d0c8"/><rect x="247.30" y="380.00" width="499.70" height="1.30" fill="#aaa9a4"/><rect x="246.00" y="393.70" width="501.00" height="1.00" fill="#8c8c88"/><rect x="746.00" y="379.00" width="1.00" height="15.60" fill="#9a9a96"/><rect x="246.00" y="394.70" width="504.00" height="2.40" fill="#f1f1ed"/><rect x="243.00" y="397.10" width="507.00" height="1.00" fill="#8e8e8a"/><rect x="747.00" y="42.40" width="1.70" height="352.40" fill="#ececea"/><rect x="748.55" y="42.40" width="0.90" height="354.80" fill="#6c6c6c"/><rect x="749.40" y="42.40" width="0.60" height="355.00" fill="#e4e4e0"/><rect x="246.80" y="380.00" width="28.80" height="14.00" fill="#d4d0c8"/><rect x="274.60" y="380.00" width="1.00" height="14.00" fill="#808080"/><rect x="246.80" y="393.00" width="28.80" height="1.00" fill="#808080"/><rect x="246.80" y="380.00" width="1.00" height="14.00" fill="#fff"/><rect x="246.80" y="380.00" width="28.80" height="1.00" fill="#fff"/><rect x="276.20" y="380.00" width="32.00" height="14.00" fill="#d4d0c8"/><rect x="307.20" y="380.00" width="1.00" height="14.00" fill="#808080"/><rect x="276.20" y="393.00" width="32.00" height="1.00" fill="#808080"/><rect x="276.20" y="380.00" width="1.00" height="14.00" fill="#fff"/><rect x="276.20" y="380.00" width="32.00" height="1.00" fill="#fff"/></svg>
<span class="t" style="left:252.60px;top:383.30px;font-size:8.0px;line-height:9.60px;color:#000;font-weight:bold;transform-origin:0 0;transform:scaleX(0.8006);">Choix</span>
<span class="t" style="left:283.50px;top:383.30px;font-size:8.0px;line-height:9.60px;color:#000;font-weight:bold;transform-origin:0 0;transform:scaleX(0.8801);">Dater</span>
<svg style="left:0;top:0" width="750" height="600" viewBox="0 0 750 600"><polygon points="380.80,91.00 384.40,91.00 497.70,204.00 494.10,204.00" fill="#1612cc" stroke="#0b0b7c" stroke-width="0.85" stroke-linejoin="miter"/><polygon points="494.10,204.00 497.70,204.00 497.70,221.60 494.10,221.60" fill="#1612cc" stroke="#0b0b7c" stroke-width="0.85" stroke-linejoin="miter"/><polygon points="507.20,191.70 510.80,191.70 497.70,204.00 494.10,204.00" fill="#1612cc" stroke="#0b0b7c" stroke-width="0.85" stroke-linejoin="miter"/><polygon points="406.00,91.00 409.60,91.00 510.80,191.70 507.20,191.70" fill="#1612cc" stroke="#0b0b7c" stroke-width="0.85" stroke-linejoin="miter"/><polygon points="431.20,91.00 434.80,91.00 447.40,103.30 443.80,103.30" fill="#1612cc" stroke="#0b0b7c" stroke-width="0.85" stroke-linejoin="miter"/><polygon points="456.40,91.00 460.00,91.00 447.40,103.30 443.80,103.30" fill="#1612cc" stroke="#0b0b7c" stroke-width="0.85" stroke-linejoin="miter"/><polygon points="443.80,103.30 447.40,103.30 510.80,191.70 507.20,191.70" fill="#1612cc" stroke="#0b0b7c" stroke-width="0.85" stroke-linejoin="miter"/><polygon points="481.60,91.00 485.20,91.00 510.80,191.70 507.20,191.70" fill="#1612cc" stroke="#0b0b7c" stroke-width="0.85" stroke-linejoin="miter"/><polygon points="607.60,91.00 611.20,91.00 510.80,191.70 507.20,191.70" fill="#1612cc" stroke="#0b0b7c" stroke-width="0.85" stroke-linejoin="miter"/><polygon points="506.80,91.00 510.40,91.00 560.80,141.30 557.20,141.30" fill="#1612cc" stroke="#0b0b7c" stroke-width="0.85" stroke-linejoin="miter"/><polygon points="557.20,115.90 560.80,115.90 573.40,128.50 569.80,128.50" fill="#1612cc" stroke="#0b0b7c" stroke-width="0.85" stroke-linejoin="miter"/><polygon points="582.40,91.00 586.00,91.00 560.80,115.90 557.20,115.90" fill="#1612cc" stroke="#0b0b7c" stroke-width="0.85" stroke-linejoin="miter"/><polygon points="551.50,110.20 555.10,110.20 560.80,115.90 557.20,115.90" fill="#1612cc" stroke="#0b0b7c" stroke-width="0.85" stroke-linejoin="miter"/><polygon points="532.05,91.00 535.55,91.00 555.05,110.20 551.55,110.20" fill="#dcdc3c" stroke="#6c6c14" stroke-width="0.9" stroke-linejoin="miter"/><polygon points="557.25,91.00 560.75,91.00 548.15,103.30 544.65,103.30" fill="#dcdc3c" stroke="#6c6c14" stroke-width="0.9" stroke-linejoin="miter"/><rect x="443.80" y="101.50" width="3.6" height="3.6" fill="#1414bc" stroke="#0a0a70" stroke-width="0.7"/><rect x="507.00" y="189.70" width="4" height="4" fill="#1414bc" stroke="#0a0a70" stroke-width="0.7"/><rect x="557.20" y="139.50" width="3.6" height="3.6" fill="#1414bc" stroke="#0a0a70" stroke-width="0.7"/><rect x="569.80" y="126.70" width="3.6" height="3.6" fill="#1414bc" stroke="#0a0a70" stroke-width="0.7"/><rect x="557.20" y="114.10" width="3.6" height="3.6" fill="#1414bc" stroke="#0a0a70" stroke-width="0.7"/><rect x="544.70" y="101.60" width="3.4" height="3.4" fill="#f8f850" stroke="#7c7c18" stroke-width="0.8"/><rect x="494.05" y="202.15" width="3.7" height="3.7" fill="#ffffff" stroke="#30305c" stroke-width="0.85"/></svg>
<span class="t" style="left:383.20px;top:88.10px;font-size:7.6px;line-height:9.12px;color:#2020d0;font-weight:normal;transform-origin:0 0;transform:rotate(-90deg) scaleX(0.7897) translateY(-4.56px);">Homme</span>
<span class="t" style="left:408.40px;top:88.10px;font-size:7.6px;line-height:9.12px;color:#000;font-weight:normal;transform-origin:0 0;transform:rotate(-90deg) scaleX(0.8087) translateY(-4.56px);">Caméléon</span>
<span class="t" style="left:433.60px;top:88.10px;font-size:7.6px;line-height:9.12px;color:#000;font-weight:normal;transform-origin:0 0;transform:rotate(-90deg) scaleX(0.7880) translateY(-4.56px);">Vipère</span>
<span class="t" style="left:458.80px;top:88.10px;font-size:7.6px;line-height:9.12px;color:#000;font-weight:normal;transform-origin:0 0;transform:rotate(-90deg) scaleX(0.8139) translateY(-4.56px);">Boa</span>
<span class="t" style="left:484.00px;top:88.10px;font-size:7.6px;line-height:9.12px;color:#000;font-weight:normal;transform-origin:0 0;transform:rotate(-90deg) scaleX(0.8005) translateY(-4.56px);">Lézard</span>
<span class="t" style="left:509.20px;top:88.10px;font-size:7.6px;line-height:9.12px;color:#000;font-weight:normal;transform-origin:0 0;transform:rotate(-90deg) scaleX(0.7981) translateY(-4.56px);">Crocodile</span>
<span class="t" style="left:534.40px;top:88.10px;font-size:7.6px;line-height:9.12px;color:#000;font-weight:normal;transform-origin:0 0;transform:rotate(-90deg) scaleX(0.8032) translateY(-4.56px);">Pigeon</span>
<span class="t" style="left:559.60px;top:88.10px;font-size:7.6px;line-height:9.12px;color:#000;font-weight:normal;transform-origin:0 0;transform:rotate(-90deg) scaleX(0.8192) translateY(-4.56px);">Mésange</span>
<span class="t" style="left:584.80px;top:88.10px;font-size:7.6px;line-height:9.12px;color:#e43030;font-weight:normal;transform-origin:0 0;transform:rotate(-90deg) scaleX(0.8087) translateY(-4.56px);">Archaeopteryx</span>
<span class="t" style="left:610.00px;top:88.10px;font-size:7.6px;line-height:9.12px;color:#e43030;font-weight:normal;transform-origin:0 0;transform:rotate(-90deg) scaleX(0.7796) translateY(-4.56px);">Caudiptéryx</span>
<svg style="left:0;top:0" width="750" height="600" viewBox="0 0 750 600"><rect x="0.00" y="398.20" width="750.00" height="2.00" fill="#f1f1ed"/><rect x="0.00" y="400.20" width="750.00" height="0.90" fill="#a6a6a2"/><rect x="0.00" y="401.10" width="750.00" height="1.50" fill="#f1f1ed"/><rect x="0.00" y="402.60" width="750.00" height="179.00" fill="#d4d0c8"/><rect x="2.00" y="404.10" width="58.40" height="57.80" fill="#f0f0ec"/><rect x="1.30" y="403.40" width="58.40" height="57.80" fill="#d4d0c8"/><rect x="1.30" y="403.40" width="1.00" height="57.80" fill="#68665f"/><rect x="58.70" y="403.40" width="1.00" height="57.80" fill="#68665f"/><rect x="1.30" y="403.40" width="58.40" height="1.00" fill="#68665f"/><rect x="1.30" y="460.20" width="58.40" height="1.00" fill="#68665f"/><rect x="2.00" y="463.70" width="58.40" height="19.20" fill="#f0f0ec"/><rect x="1.30" y="463.00" width="58.40" height="19.20" fill="#d4d0c8"/><rect x="1.30" y="463.00" width="1.00" height="19.20" fill="#68665f"/><rect x="58.70" y="463.00" width="1.00" height="19.20" fill="#68665f"/><rect x="1.30" y="463.00" width="58.40" height="1.00" fill="#68665f"/><rect x="1.30" y="481.20" width="58.40" height="1.00" fill="#68665f"/><rect x="3.40" y="405.80" width="54.80" height="17.20" fill="#d4d0c8"/><rect x="57.30" y="405.80" width="0.90" height="17.20" fill="#8a8880"/><rect x="3.40" y="422.10" width="54.80" height="0.90" fill="#8a8880"/><rect x="3.40" y="405.80" width="0.80" height="17.20" fill="#f2f2ee"/><rect x="3.40" y="405.80" width="54.80" height="0.80" fill="#f2f2ee"/><rect x="3.40" y="423.50" width="54.80" height="17.00" fill="#d4d0c8"/><rect x="57.30" y="423.50" width="0.90" height="17.00" fill="#8a8880"/><rect x="3.40" y="439.60" width="54.80" height="0.90" fill="#8a8880"/><rect x="3.40" y="423.50" width="0.80" height="17.00" fill="#f2f2ee"/><rect x="3.40" y="423.50" width="54.80" height="0.80" fill="#f2f2ee"/><rect x="3.40" y="441.20" width="54.80" height="17.50" fill="#d4d0c8"/><rect x="57.30" y="441.20" width="0.90" height="17.50" fill="#8a8880"/><rect x="3.40" y="457.80" width="54.80" height="0.90" fill="#8a8880"/><rect x="3.40" y="441.20" width="0.80" height="17.50" fill="#f2f2ee"/><rect x="3.40" y="441.20" width="54.80" height="0.80" fill="#f2f2ee"/></svg>
<svg style="left:4.2px;top:406.6px" width="17.4" height="16" viewBox="0 0 17.4 16"><rect x="0" y="0" width="17.4" height="16" fill="#c6c4be"/><rect x="0" y="0" width="11.6" height="8.8" fill="#b4b2ac"/><path d="M12.3 0 V16 M0 9.3 H17.4" stroke="#f2f2ee" stroke-width="1.1" fill="none"/><path d="M8.6 9.8 V16" stroke="#e8e8e4" stroke-width="0.8"/><path d="M1.8 6.4 L4 3.4 L6.2 6.4 Z" fill="#484848"/><path d="M1.4 7.4 H6.6" stroke="#585858" stroke-width="0.8"/><path d="M6.4 3.4 L9 1.4 V5.4 Z" fill="#484848"/><path d="M8.6 3.4 H11.2" stroke="#484848" stroke-width="0.9"/><path d="M13.4 3.4 H16" stroke="#484848" stroke-width="0.9"/><path d="M17 3.4 L14.8 1.6 V5.2 Z" fill="#484848"/><path d="M2.4 11.6 H6.2 L4.3 14 Z" fill="#505050"/></svg>
<span class="t" style="left:26.00px;top:406.70px;font-size:8.0px;line-height:9.60px;color:#161616;font-weight:normal;transform-origin:0 0;transform:scaleX(0.8142);">Organiser</span>
<span class="t" style="left:26.60px;top:414.30px;font-size:8.0px;line-height:9.60px;color:#161616;font-weight:normal;transform-origin:0 0;transform:scaleX(0.7896);">le tableau</span>
<svg style="left:0;top:0" width="750" height="600" viewBox="0 0 750 600"><rect x="21.70" y="424.00" width="36.40" height="16.10" fill="#c4fcc8"/></svg>
<svg style="left:4.2px;top:424px" width="17.6" height="16.4" viewBox="0 0 17.6 16.4"><rect x="1.8" y="0.3" width="15.8" height="7.6" fill="#fdfdfd"/><path d="M5 1.4 L8.4 4.6 L11.8 1.4 M8.4 4.6 V7.4" stroke="#2424e4" stroke-width="1.2" fill="none"/><path d="M15.2 1.2 V7.2" stroke="#e820e0" stroke-width="1.3"/><rect x="1.8" y="9" width="15.8" height="7.4" fill="#cac6be"/><path d="M1.8 16.4 V9 H17.6" stroke="#5c5c5c" stroke-width="0.9" fill="none"/><path d="M2.6 16 L4.4 14 L5.4 15 L8.8 11 L13.6 16.2 Z" fill="#3c3c3c"/><path d="M9 11.2 L13.4 16 L10.6 16 Z" fill="#f4f4f4"/></svg>
<span class="t" style="left:29.90px;top:424.20px;font-size:8.0px;line-height:9.60px;color:#147414;font-weight:normal;transform-origin:0 0;transform:scaleX(0.8351);">Choisir</span>
<span class="t" style="left:26.40px;top:431.40px;font-size:8.0px;line-height:9.60px;color:#147414;font-weight:normal;transform-origin:0 0;transform:scaleX(0.7716);">les taxons</span>
<svg style="left:6.6px;top:442.4px" width="15.2" height="16.2" viewBox="0 0 15.2 16.2"><g filter="url(#bl2)"><rect width="15.2" height="16.2" fill="#e4dcd0"/><path d="M1.4 7 Q2.6 2.4 7 2 Q12.6 2.4 14.6 7.6 L15.2 16.2 L9.6 16.2 Q10.8 11.6 7.8 10.2 Q5.4 12 3.8 15 L1.4 13.6 Q0.8 10 1.4 7 Z" fill="#cc7c2c"/><path d="M4.4 2.6 Q9.4 0.4 13.4 3.8 Q15.4 6.6 15.2 12 Q13 6.6 9 5.2 Q6.2 4.4 4.4 2.6 Z" fill="#3c220c"/><path d="M3.4 7 Q5.4 8.4 7.2 10 Q5.2 10.8 3.8 13.4 Z" fill="#eaac64"/><path d="M9 7 Q11.6 9.6 11.6 15.6" stroke="#7c3c10" stroke-width="1.2" fill="none"/><circle cx="4.4" cy="6" r="0.8" fill="#1c0c04"/></g></svg>
<span class="t" style="left:24.70px;top:442.00px;font-size:8.0px;line-height:9.60px;color:#161616;font-weight:normal;transform-origin:0 0;transform:scaleX(0.7759);">Afficher les</span>
<span class="t" style="left:24.70px;top:449.60px;font-size:8.0px;line-height:9.60px;color:#161616;font-weight:normal;transform-origin:0 0;transform:scaleX(0.7818);">documents</span>
<svg style="left:0;top:0" width="750" height="600" viewBox="0 0 750 600"><rect x="2.20" y="464.30" width="17.20" height="16.90" fill="#d4d0c8"/><rect x="18.40" y="464.30" width="1.00" height="16.90" fill="#6c6a64"/><rect x="2.20" y="480.20" width="17.20" height="1.00" fill="#6c6a64"/><rect x="2.20" y="464.30" width="1.00" height="16.90" fill="#f6f6f2"/><rect x="2.20" y="464.30" width="17.20" height="1.00" fill="#f6f6f2"/></svg>
<span class="t" style="left:3.80px;top:467.40px;font-size:9px;line-height:10.80px;color:#101010;font-weight:bold;transform-origin:0 0;transform:scaleX(0.7459);">RAZ</span>
<span class="t" style="left:26.60px;top:464.00px;font-size:8.0px;line-height:9.60px;color:#161616;font-weight:normal;transform-origin:0 0;transform:scaleX(0.7658);">Remettre</span>
<span class="t" style="left:30.90px;top:471.50px;font-size:8.0px;line-height:9.60px;color:#161616;font-weight:normal;transform-origin:0 0;transform:scaleX(0.7466);">à zéro</span>
<svg style="left:0;top:0" width="750" height="600" viewBox="0 0 750 600"><rect x="62.00" y="402.80" width="686.60" height="177.00" fill="#ffffff"/><rect x="62.00" y="402.80" width="1.20" height="177.00" fill="#606060"/><rect x="62.00" y="402.80" width="686.60" height="1.00" fill="#606060"/><rect x="749.25" y="402.80" width="0.75" height="177.60" fill="#84847e"/><rect x="63.20" y="403.60" width="44.60" height="14.40" fill="#c3c3c3"/><rect x="106.70" y="403.60" width="1.10" height="14.40" fill="#54544c"/><rect x="63.20" y="416.30" width="44.60" height="1.70" fill="#54544c"/><rect x="63.20" y="403.60" width="0.80" height="14.40" fill="#f6f6f6"/><rect x="63.20" y="403.60" width="44.60" height="1.00" fill="#f6f6f6"/><rect x="108.00" y="403.60" width="56.30" height="14.40" fill="#c3c3c3"/><rect x="163.20" y="403.60" width="1.10" height="14.40" fill="#54544c"/><rect x="108.00" y="416.30" width="56.30" height="1.70" fill="#54544c"/><rect x="108.00" y="403.60" width="0.80" height="14.40" fill="#f6f6f6"/><rect x="108.00" y="403.60" width="56.30" height="1.00" fill="#f6f6f6"/></svg>
<span class="t" style="left:110.25px;top:405.06px;font-size:8.4px;line-height:10.08px;color:#1a1a1a;font-weight:normal;transform-origin:0 0;transform:scaleX(0.7340);">Crâne et Vertèbres</span>
<svg style="left:0;top:0" width="750" height="600" viewBox="0 0 750 600"><rect x="164.60" y="403.60" width="26.40" height="14.40" fill="#c3c3c3"/><rect x="189.90" y="403.60" width="1.10" height="14.40" fill="#54544c"/><rect x="164.60" y="416.30" width="26.40" height="1.70" fill="#54544c"/><rect x="164.60" y="403.60" width="0.80" height="14.40" fill="#f6f6f6"/><rect x="164.60" y="403.60" width="26.40" height="1.00" fill="#f6f6f6"/></svg>
<span class="t" style="left:167.60px;top:405.06px;font-size:8.4px;line-height:10.08px;color:#1a1a1a;font-weight:normal;transform-origin:0 0;transform:scaleX(0.7230);">Amnios</span>
<svg style="left:0;top:0" width="750" height="600" viewBox="0 0 750 600"><rect x="191.20" y="403.60" width="75.60" height="14.40" fill="#c3c3c3"/><rect x="265.70" y="403.60" width="1.10" height="14.40" fill="#54544c"/><rect x="191.20" y="416.30" width="75.60" height="1.70" fill="#54544c"/><rect x="191.20" y="403.60" width="0.80" height="14.40" fill="#f6f6f6"/><rect x="191.20" y="403.60" width="75.60" height="1.00" fill="#f6f6f6"/></svg>
<span class="t" style="left:194.10px;top:405.06px;font-size:8.4px;line-height:10.08px;color:#1a1a1a;font-weight:normal;transform-origin:0 0;transform:scaleX(0.7257);">Deux fenêtres temporales</span>
<svg style="left:0;top:0" width="750" height="600" viewBox="0 0 750 600"><rect x="267.10" y="403.60" width="62.50" height="14.40" fill="#c3c3c3"/><rect x="328.50" y="403.60" width="1.10" height="14.40" fill="#54544c"/><rect x="267.10" y="416.30" width="62.50" height="1.70" fill="#54544c"/><rect x="267.10" y="403.60" width="0.80" height="14.40" fill="#f6f6f6"/><rect x="267.10" y="403.60" width="62.50" height="1.00" fill="#f6f6f6"/></svg>
<span class="t" style="left:269.75px;top:405.06px;font-size:8.4px;line-height:10.08px;color:#1a1a1a;font-weight:normal;transform-origin:0 0;transform:scaleX(0.7201);">Fenêtre mandibulaire</span>
<svg style="left:0;top:0" width="750" height="600" viewBox="0 0 750 600"><rect x="329.80" y="403.60" width="26.20" height="14.40" fill="#c3c3c3"/><rect x="354.90" y="403.60" width="1.10" height="14.40" fill="#54544c"/><rect x="329.80" y="416.30" width="26.20" height="1.70" fill="#54544c"/><rect x="329.80" y="403.60" width="0.80" height="14.40" fill="#f6f6f6"/><rect x="329.80" y="403.60" width="26.20" height="1.00" fill="#f6f6f6"/></svg>
<span class="t" style="left:334.10px;top:405.06px;font-size:8.4px;line-height:10.08px;color:#1a1a1a;font-weight:normal;transform-origin:0 0;transform:scaleX(0.7053);">Gésier</span>
<svg style="left:0;top:0" width="750" height="600" viewBox="0 0 750 600"><rect x="356.20" y="403.60" width="61.00" height="14.40" fill="#c3c3c3"/><rect x="416.10" y="403.60" width="1.10" height="14.40" fill="#54544c"/><rect x="356.20" y="416.30" width="61.00" height="1.70" fill="#54544c"/><rect x="356.20" y="403.60" width="0.80" height="14.40" fill="#f6f6f6"/><rect x="356.20" y="403.60" width="61.00" height="1.00" fill="#f6f6f6"/></svg>
<span class="t" style="left:358.80px;top:405.06px;font-size:8.4px;line-height:10.08px;color:#1a1a1a;font-weight:normal;transform-origin:0 0;transform:scaleX(0.7326);">Membrane nictitante</span>
<svg style="left:0;top:0" width="750" height="600" viewBox="0 0 750 600"><rect x="417.60" y="403.60" width="32.60" height="14.40" fill="#c3c3c3"/><rect x="449.10" y="403.60" width="1.10" height="14.40" fill="#54544c"/><rect x="417.60" y="416.30" width="32.60" height="1.70" fill="#54544c"/><rect x="417.60" y="403.60" width="0.80" height="14.40" fill="#f6f6f6"/><rect x="417.60" y="403.60" width="32.60" height="1.00" fill="#f6f6f6"/></svg>
<span class="t" style="left:423.20px;top:405.06px;font-size:8.4px;line-height:10.08px;color:#1a1a1a;font-weight:normal;transform-origin:0 0;transform:scaleX(0.6944);">Plumes</span>
<svg style="left:0;top:0" width="750" height="600" viewBox="0 0 750 600"><rect x="450.40" y="403.60" width="32.60" height="14.40" fill="#c3c3c3"/><rect x="481.90" y="403.60" width="1.10" height="14.40" fill="#54544c"/><rect x="450.40" y="416.30" width="32.60" height="1.70" fill="#54544c"/><rect x="450.40" y="403.60" width="0.80" height="14.40" fill="#f6f6f6"/><rect x="450.40" y="403.60" width="32.60" height="1.00" fill="#f6f6f6"/></svg>
<span class="t" style="left:459.50px;top:405.06px;font-size:8.4px;line-height:10.08px;color:#1a1a1a;font-weight:normal;transform-origin:0 0;transform:scaleX(0.6830);">Ailes</span>
<svg style="left:0;top:0" width="750" height="600" viewBox="0 0 750 600"><rect x="483.10" y="403.60" width="26.30" height="14.00" fill="#c8c8c8"/><rect x="508.80" y="403.60" width="0.60" height="14.00" fill="#e8e8e8"/><rect x="483.10" y="416.70" width="26.30" height="0.90" fill="#e8e8e8"/><rect x="483.10" y="403.60" width="1.00" height="14.00" fill="#7c7c7c"/><rect x="483.10" y="403.60" width="26.30" height="1.20" fill="#7c7c7c"/></svg>
<span class="t" style="left:484.95px;top:405.06px;font-size:8.4px;line-height:10.08px;color:#1a1a1a;font-weight:normal;transform-origin:0 0;transform:scaleX(0.7827);">Bréchet</span>
<svg style="left:0;top:0" width="750" height="600" viewBox="0 0 750 600"><rect x="510.20" y="403.60" width="52.40" height="14.40" fill="#c3c3c3"/><rect x="561.50" y="403.60" width="1.10" height="14.40" fill="#54544c"/><rect x="510.20" y="416.30" width="52.40" height="1.70" fill="#54544c"/><rect x="510.20" y="403.60" width="0.80" height="14.40" fill="#f6f6f6"/><rect x="510.20" y="403.60" width="52.40" height="1.00" fill="#f6f6f6"/></svg>
<span class="t" style="left:512.60px;top:405.06px;font-size:8.4px;line-height:10.08px;color:#1a1a1a;font-weight:normal;transform-origin:0 0;transform:scaleX(0.7377);">Appendices pairs</span>
<svg style="left:0;top:0" width="750" height="600" viewBox="0 0 750 600"><rect x="63.20" y="418.20" width="44.00" height="14.62" fill="#c5c5c5"/><rect x="106.60" y="418.20" width="0.60" height="14.62" fill="#f0f0f0"/><rect x="63.20" y="431.62" width="44.00" height="1.20" fill="#fdfdfd"/><rect x="63.20" y="418.20" width="44.00" height="1.70" fill="#767676"/></svg>
<span class="t" style="left:72.50px;top:419.76px;font-size:8.4px;line-height:10.08px;color:#202020;font-weight:normal;transform-origin:0 0;transform:scaleX(0.7198);">Mésange</span>
<svg style="left:0;top:0" width="750" height="600" viewBox="0 0 750 600"><rect x="107.70" y="417.85" width="56.60" height="14.82" fill="#ffffff"/><rect x="107.70" y="417.85" width="1.30" height="14.82" fill="#0404cc"/><rect x="163.00" y="417.85" width="1.30" height="14.82" fill="#0404cc"/><rect x="107.70" y="417.85" width="56.60" height="1.30" fill="#0404cc"/><rect x="107.70" y="431.37" width="56.60" height="1.30" fill="#0404cc"/></svg>
<span class="t" style="left:123.85px;top:419.86px;font-size:8.4px;line-height:10.08px;color:#2020c8;font-weight:normal;transform-origin:0 0;transform:scaleX(0.7380);">Présents</span>
<svg style="left:0;top:0" width="750" height="600" viewBox="0 0 750 600"><rect x="164.30" y="417.85" width="26.70" height="14.82" fill="#ffffff"/><rect x="164.30" y="417.85" width="1.30" height="14.82" fill="#0404cc"/><rect x="189.70" y="417.85" width="1.30" height="14.82" fill="#0404cc"/><rect x="164.30" y="417.85" width="26.70" height="1.30" fill="#0404cc"/><rect x="164.30" y="431.37" width="26.70" height="1.30" fill="#0404cc"/></svg>
<span class="t" style="left:167.00px;top:419.86px;font-size:8.4px;line-height:10.08px;color:#2020c8;font-weight:normal;transform-origin:0 0;transform:scaleX(0.7411);">Présent</span>
<svg style="left:0;top:0" width="750" height="600" viewBox="0 0 750 600"><rect x="190.90" y="418.40" width="75.90" height="14.82" fill="#ffff00"/><rect x="190.90" y="418.40" width="0.60" height="14.82" fill="#c4c49c"/><rect x="266.20" y="418.40" width="0.60" height="14.82" fill="#c4c49c"/><rect x="190.90" y="418.40" width="75.90" height="0.60" fill="#c4c49c"/><rect x="190.90" y="432.62" width="75.90" height="0.60" fill="#c4c49c"/></svg>
<span class="t" style="left:224.40px;top:419.86px;font-size:8.4px;line-height:10.08px;color:#101000;font-weight:normal;transform-origin:0 0;transform:scaleX(0.6898);">Oui</span>
<svg style="left:0;top:0" width="750" height="600" viewBox="0 0 750 600"><rect x="266.80" y="418.40" width="62.80" height="14.82" fill="#ffff00"/><rect x="266.80" y="418.40" width="0.60" height="14.82" fill="#c4c49c"/><rect x="329.00" y="418.40" width="0.60" height="14.82" fill="#c4c49c"/><rect x="266.80" y="418.40" width="62.80" height="0.60" fill="#c4c49c"/><rect x="266.80" y="432.62" width="62.80" height="0.60" fill="#c4c49c"/></svg>
<span class="t" style="left:285.95px;top:419.86px;font-size:8.4px;line-height:10.08px;color:#101000;font-weight:normal;transform-origin:0 0;transform:scaleX(0.7336);">Présente</span>
<svg style="left:0;top:0" width="750" height="600" viewBox="0 0 750 600"><rect x="329.50" y="418.40" width="26.50" height="14.82" fill="#ffff00"/><rect x="329.50" y="418.40" width="0.60" height="14.82" fill="#c4c49c"/><rect x="355.40" y="418.40" width="0.60" height="14.82" fill="#c4c49c"/><rect x="329.50" y="418.40" width="26.50" height="0.60" fill="#c4c49c"/><rect x="329.50" y="432.62" width="26.50" height="0.60" fill="#c4c49c"/></svg>
<span class="t" style="left:332.10px;top:419.86px;font-size:8.4px;line-height:10.08px;color:#101000;font-weight:normal;transform-origin:0 0;transform:scaleX(0.7411);">Présent</span>
<svg style="left:0;top:0" width="750" height="600" viewBox="0 0 750 600"><rect x="355.90" y="418.40" width="61.30" height="14.82" fill="#ffff00"/><rect x="355.90" y="418.40" width="0.60" height="14.82" fill="#c4c49c"/><rect x="416.60" y="418.40" width="0.60" height="14.82" fill="#c4c49c"/><rect x="355.90" y="418.40" width="61.30" height="0.60" fill="#c4c49c"/><rect x="355.90" y="432.62" width="61.30" height="0.60" fill="#c4c49c"/></svg>
<span class="t" style="left:374.30px;top:419.86px;font-size:8.4px;line-height:10.08px;color:#101000;font-weight:normal;transform-origin:0 0;transform:scaleX(0.7336);">Présente</span>
<svg style="left:0;top:0" width="750" height="600" viewBox="0 0 750 600"><rect x="417.30" y="418.40" width="32.90" height="14.82" fill="#ffff00"/><rect x="417.30" y="418.40" width="0.60" height="14.82" fill="#c4c49c"/><rect x="449.60" y="418.40" width="0.60" height="14.82" fill="#c4c49c"/><rect x="417.30" y="418.40" width="32.90" height="0.60" fill="#c4c49c"/><rect x="417.30" y="432.62" width="32.90" height="0.60" fill="#c4c49c"/></svg>
<span class="t" style="left:420.10px;top:419.86px;font-size:8.4px;line-height:10.08px;color:#101000;font-weight:normal;transform-origin:0 0;transform:scaleX(0.7264);">Présentes</span>
<svg style="left:0;top:0" width="750" height="600" viewBox="0 0 750 600"><rect x="450.10" y="418.40" width="32.90" height="14.82" fill="#ffff00"/><rect x="450.10" y="418.40" width="0.60" height="14.82" fill="#c4c49c"/><rect x="482.40" y="418.40" width="0.60" height="14.82" fill="#c4c49c"/><rect x="450.10" y="418.40" width="32.90" height="0.60" fill="#c4c49c"/><rect x="450.10" y="432.62" width="32.90" height="0.60" fill="#c4c49c"/></svg>
<span class="t" style="left:452.90px;top:419.86px;font-size:8.4px;line-height:10.08px;color:#101000;font-weight:normal;transform-origin:0 0;transform:scaleX(0.7264);">Présentes</span>
<svg style="left:0;top:0" width="750" height="600" viewBox="0 0 750 600"><rect x="482.80" y="418.40" width="27.00" height="14.82" fill="#ffff00"/><rect x="482.80" y="418.40" width="0.60" height="14.82" fill="#c4c49c"/><rect x="509.20" y="418.40" width="0.60" height="14.82" fill="#c4c49c"/><rect x="482.80" y="418.40" width="27.00" height="0.60" fill="#c4c49c"/><rect x="482.80" y="432.62" width="27.00" height="0.60" fill="#c4c49c"/></svg>
<span class="t" style="left:485.65px;top:419.86px;font-size:8.4px;line-height:10.08px;color:#101000;font-weight:normal;transform-origin:0 0;transform:scaleX(0.7411);">Présent</span>
<svg style="left:0;top:0" width="750" height="600" viewBox="0 0 750 600"><rect x="509.90" y="417.85" width="52.70" height="14.82" fill="#ffffff"/><rect x="509.90" y="417.85" width="1.30" height="14.82" fill="#0404cc"/><rect x="561.30" y="417.85" width="1.30" height="14.82" fill="#0404cc"/><rect x="509.90" y="417.85" width="52.70" height="1.30" fill="#0404cc"/><rect x="509.90" y="431.37" width="52.70" height="1.30" fill="#0404cc"/></svg>
<span class="t" style="left:519.80px;top:419.86px;font-size:8.4px;line-height:10.08px;color:#2020c8;font-weight:normal;transform-origin:0 0;transform:scaleX(0.7647);">Avec doigts</span>
<svg style="left:0;top:0" width="750" height="600" viewBox="0 0 750 600"><rect x="63.20" y="432.82" width="44.00" height="14.62" fill="#c5c5c5"/><rect x="106.60" y="432.82" width="0.60" height="14.62" fill="#f0f0f0"/><rect x="63.20" y="446.24" width="44.00" height="1.20" fill="#fdfdfd"/><rect x="63.20" y="432.82" width="44.00" height="1.70" fill="#767676"/></svg>
<span class="t" style="left:75.60px;top:434.38px;font-size:8.4px;line-height:10.08px;color:#202020;font-weight:normal;transform-origin:0 0;transform:scaleX(0.7132);">Pigeon</span>
<svg style="left:0;top:0" width="750" height="600" viewBox="0 0 750 600"><rect x="107.70" y="432.47" width="56.60" height="14.82" fill="#ffffff"/><rect x="107.70" y="432.47" width="1.30" height="14.82" fill="#0404cc"/><rect x="163.00" y="432.47" width="1.30" height="14.82" fill="#0404cc"/><rect x="107.70" y="432.47" width="56.60" height="1.30" fill="#0404cc"/><rect x="107.70" y="445.99" width="56.60" height="1.30" fill="#0404cc"/></svg>
<span class="t" style="left:123.85px;top:434.48px;font-size:8.4px;line-height:10.08px;color:#2020c8;font-weight:normal;transform-origin:0 0;transform:scaleX(0.7380);">Présents</span>
<svg style="left:0;top:0" width="750" height="600" viewBox="0 0 750 600"><rect x="164.30" y="432.47" width="26.70" height="14.82" fill="#ffffff"/><rect x="164.30" y="432.47" width="1.30" height="14.82" fill="#0404cc"/><rect x="189.70" y="432.47" width="1.30" height="14.82" fill="#0404cc"/><rect x="164.30" y="432.47" width="26.70" height="1.30" fill="#0404cc"/><rect x="164.30" y="445.99" width="26.70" height="1.30" fill="#0404cc"/></svg>
<span class="t" style="left:167.00px;top:434.48px;font-size:8.4px;line-height:10.08px;color:#2020c8;font-weight:normal;transform-origin:0 0;transform:scaleX(0.7411);">Présent</span>
<svg style="left:0;top:0" width="750" height="600" viewBox="0 0 750 600"><rect x="190.90" y="433.02" width="75.90" height="14.82" fill="#ffff00"/><rect x="190.90" y="433.02" width="0.60" height="14.82" fill="#c4c49c"/><rect x="266.20" y="433.02" width="0.60" height="14.82" fill="#c4c49c"/><rect x="190.90" y="433.02" width="75.90" height="0.60" fill="#c4c49c"/><rect x="190.90" y="447.24" width="75.90" height="0.60" fill="#c4c49c"/></svg>
<span class="t" style="left:224.40px;top:434.48px;font-size:8.4px;line-height:10.08px;color:#101000;font-weight:normal;transform-origin:0 0;transform:scaleX(0.6898);">Oui</span>
<svg style="left:0;top:0" width="750" height="600" viewBox="0 0 750 600"><rect x="266.80" y="433.02" width="62.80" height="14.82" fill="#ffff00"/><rect x="266.80" y="433.02" width="0.60" height="14.82" fill="#c4c49c"/><rect x="329.00" y="433.02" width="0.60" height="14.82" fill="#c4c49c"/><rect x="266.80" y="433.02" width="62.80" height="0.60" fill="#c4c49c"/><rect x="266.80" y="447.24" width="62.80" height="0.60" fill="#c4c49c"/></svg>
<span class="t" style="left:285.95px;top:434.48px;font-size:8.4px;line-height:10.08px;color:#101000;font-weight:normal;transform-origin:0 0;transform:scaleX(0.7336);">Présente</span>
<svg style="left:0;top:0" width="750" height="600" viewBox="0 0 750 600"><rect x="329.50" y="433.02" width="26.50" height="14.82" fill="#ffff00"/><rect x="329.50" y="433.02" width="0.60" height="14.82" fill="#c4c49c"/><rect x="355.40" y="433.02" width="0.60" height="14.82" fill="#c4c49c"/><rect x="329.50" y="433.02" width="26.50" height="0.60" fill="#c4c49c"/><rect x="329.50" y="447.24" width="26.50" height="0.60" fill="#c4c49c"/></svg>
<span class="t" style="left:332.10px;top:434.48px;font-size:8.4px;line-height:10.08px;color:#101000;font-weight:normal;transform-origin:0 0;transform:scaleX(0.7411);">Présent</span>
<svg style="left:0;top:0" width="750" height="600" viewBox="0 0 750 600"><rect x="355.90" y="433.02" width="61.30" height="14.82" fill="#ffff00"/><rect x="355.90" y="433.02" width="0.60" height="14.82" fill="#c4c49c"/><rect x="416.60" y="433.02" width="0.60" height="14.82" fill="#c4c49c"/><rect x="355.90" y="433.02" width="61.30" height="0.60" fill="#c4c49c"/><rect x="355.90" y="447.24" width="61.30" height="0.60" fill="#c4c49c"/></svg>
<span class="t" style="left:374.30px;top:434.48px;font-size:8.4px;line-height:10.08px;color:#101000;font-weight:normal;transform-origin:0 0;transform:scaleX(0.7336);">Présente</span>
<svg style="left:0;top:0" width="750" height="600" viewBox="0 0 750 600"><rect x="417.30" y="433.02" width="32.90" height="14.82" fill="#ffff00"/><rect x="417.30" y="433.02" width="0.60" height="14.82" fill="#c4c49c"/><rect x="449.60" y="433.02" width="0.60" height="14.82" fill="#c4c49c"/><rect x="417.30" y="433.02" width="32.90" height="0.60" fill="#c4c49c"/><rect x="417.30" y="447.24" width="32.90" height="0.60" fill="#c4c49c"/></svg>
<span class="t" style="left:420.10px;top:434.48px;font-size:8.4px;line-height:10.08px;color:#101000;font-weight:normal;transform-origin:0 0;transform:scaleX(0.7264);">Présentes</span>
<svg style="left:0;top:0" width="750" height="600" viewBox="0 0 750 600"><rect x="450.10" y="433.02" width="32.90" height="14.82" fill="#ffff00"/><rect x="450.10" y="433.02" width="0.60" height="14.82" fill="#c4c49c"/><rect x="482.40" y="433.02" width="0.60" height="14.82" fill="#c4c49c"/><rect x="450.10" y="433.02" width="32.90" height="0.60" fill="#c4c49c"/><rect x="450.10" y="447.24" width="32.90" height="0.60" fill="#c4c49c"/></svg>
<span class="t" style="left:452.90px;top:434.48px;font-size:8.4px;line-height:10.08px;color:#101000;font-weight:normal;transform-origin:0 0;transform:scaleX(0.7264);">Présentes</span>
<svg style="left:0;top:0" width="750" height="600" viewBox="0 0 750 600"><rect x="482.80" y="433.02" width="27.00" height="14.82" fill="#ffff00"/><rect x="482.80" y="433.02" width="0.60" height="14.82" fill="#c4c49c"/><rect x="509.20" y="433.02" width="0.60" height="14.82" fill="#c4c49c"/><rect x="482.80" y="433.02" width="27.00" height="0.60" fill="#c4c49c"/><rect x="482.80" y="447.24" width="27.00" height="0.60" fill="#c4c49c"/></svg>
<span class="t" style="left:485.65px;top:434.48px;font-size:8.4px;line-height:10.08px;color:#101000;font-weight:normal;transform-origin:0 0;transform:scaleX(0.7411);">Présent</span>
<svg style="left:0;top:0" width="750" height="600" viewBox="0 0 750 600"><rect x="509.90" y="432.47" width="52.70" height="14.82" fill="#ffffff"/><rect x="509.90" y="432.47" width="1.30" height="14.82" fill="#0404cc"/><rect x="561.30" y="432.47" width="1.30" height="14.82" fill="#0404cc"/><rect x="509.90" y="432.47" width="52.70" height="1.30" fill="#0404cc"/><rect x="509.90" y="445.99" width="52.70" height="1.30" fill="#0404cc"/></svg>
<span class="t" style="left:519.80px;top:434.48px;font-size:8.4px;line-height:10.08px;color:#2020c8;font-weight:normal;transform-origin:0 0;transform:scaleX(0.7647);">Avec doigts</span>
<svg style="left:0;top:0" width="750" height="600" viewBox="0 0 750 600"><rect x="63.20" y="447.44" width="44.00" height="14.62" fill="#c5c5c5"/><rect x="106.60" y="447.44" width="0.60" height="14.62" fill="#f0f0f0"/><rect x="63.20" y="460.86" width="44.00" height="1.20" fill="#fdfdfd"/><rect x="63.20" y="447.44" width="44.00" height="1.70" fill="#767676"/></svg>
<span class="t" style="left:64.70px;top:449.00px;font-size:8.4px;line-height:10.08px;color:#e02828;font-weight:normal;transform-origin:0 0;transform:scaleX(0.7481);">Archaeopteryx</span>
<svg style="left:0;top:0" width="750" height="600" viewBox="0 0 750 600"><rect x="107.70" y="447.09" width="56.60" height="14.82" fill="#ffffff"/><rect x="107.70" y="447.09" width="1.30" height="14.82" fill="#0404cc"/><rect x="163.00" y="447.09" width="1.30" height="14.82" fill="#0404cc"/><rect x="107.70" y="447.09" width="56.60" height="1.30" fill="#0404cc"/><rect x="107.70" y="460.61" width="56.60" height="1.30" fill="#0404cc"/></svg>
<span class="t" style="left:123.85px;top:449.10px;font-size:8.4px;line-height:10.08px;color:#2020c8;font-weight:normal;transform-origin:0 0;transform:scaleX(0.7380);">Présents</span>
<svg style="left:0;top:0" width="750" height="600" viewBox="0 0 750 600"><rect x="164.30" y="447.64" width="26.70" height="14.82" fill="#ffffff"/><rect x="164.30" y="447.64" width="0.60" height="14.82" fill="#e2e2e2"/><rect x="190.40" y="447.64" width="0.60" height="14.82" fill="#e2e2e2"/><rect x="164.30" y="447.64" width="26.70" height="0.60" fill="#e2e2e2"/><rect x="164.30" y="461.86" width="26.70" height="0.60" fill="#e2e2e2"/></svg>
<span class="t" style="left:175.75px;top:450.44px;font-size:7.0px;line-height:8.40px;color:#484848;font-weight:normal;transform-origin:0 0;transform:scaleX(1.0000);">?</span>
<svg style="left:0;top:0" width="750" height="600" viewBox="0 0 750 600"><rect x="190.90" y="447.64" width="75.90" height="14.82" fill="#ffff00"/><rect x="190.90" y="447.64" width="0.60" height="14.82" fill="#c4c49c"/><rect x="266.20" y="447.64" width="0.60" height="14.82" fill="#c4c49c"/><rect x="190.90" y="447.64" width="75.90" height="0.60" fill="#c4c49c"/><rect x="190.90" y="461.86" width="75.90" height="0.60" fill="#c4c49c"/></svg>
<span class="t" style="left:224.40px;top:449.10px;font-size:8.4px;line-height:10.08px;color:#101000;font-weight:normal;transform-origin:0 0;transform:scaleX(0.6898);">Oui</span>
<svg style="left:0;top:0" width="750" height="600" viewBox="0 0 750 600"><rect x="266.80" y="447.64" width="62.80" height="14.82" fill="#ffff00"/><rect x="266.80" y="447.64" width="0.60" height="14.82" fill="#c4c49c"/><rect x="329.00" y="447.64" width="0.60" height="14.82" fill="#c4c49c"/><rect x="266.80" y="447.64" width="62.80" height="0.60" fill="#c4c49c"/><rect x="266.80" y="461.86" width="62.80" height="0.60" fill="#c4c49c"/></svg>
<span class="t" style="left:285.95px;top:449.10px;font-size:8.4px;line-height:10.08px;color:#101000;font-weight:normal;transform-origin:0 0;transform:scaleX(0.7336);">Présente</span>
<svg style="left:0;top:0" width="750" height="600" viewBox="0 0 750 600"><rect x="329.50" y="447.64" width="26.50" height="14.82" fill="#ffffff"/><rect x="329.50" y="447.64" width="0.60" height="14.82" fill="#e2e2e2"/><rect x="355.40" y="447.64" width="0.60" height="14.82" fill="#e2e2e2"/><rect x="329.50" y="447.64" width="26.50" height="0.60" fill="#e2e2e2"/><rect x="329.50" y="461.86" width="26.50" height="0.60" fill="#e2e2e2"/></svg>
<span class="t" style="left:340.85px;top:450.44px;font-size:7.0px;line-height:8.40px;color:#484848;font-weight:normal;transform-origin:0 0;transform:scaleX(1.0000);">?</span>
<svg style="left:0;top:0" width="750" height="600" viewBox="0 0 750 600"><rect x="355.90" y="447.64" width="61.30" height="14.82" fill="#ffffff"/><rect x="355.90" y="447.64" width="0.60" height="14.82" fill="#e2e2e2"/><rect x="416.60" y="447.64" width="0.60" height="14.82" fill="#e2e2e2"/><rect x="355.90" y="447.64" width="61.30" height="0.60" fill="#e2e2e2"/><rect x="355.90" y="461.86" width="61.30" height="0.60" fill="#e2e2e2"/></svg>
<span class="t" style="left:384.65px;top:450.44px;font-size:7.0px;line-height:8.40px;color:#484848;font-weight:normal;transform-origin:0 0;transform:scaleX(1.0000);">?</span>
<svg style="left:0;top:0" width="750" height="600" viewBox="0 0 750 600"><rect x="417.30" y="447.64" width="32.90" height="14.82" fill="#ffff00"/><rect x="417.30" y="447.64" width="0.60" height="14.82" fill="#c4c49c"/><rect x="449.60" y="447.64" width="0.60" height="14.82" fill="#c4c49c"/><rect x="417.30" y="447.64" width="32.90" height="0.60" fill="#c4c49c"/><rect x="417.30" y="461.86" width="32.90" height="0.60" fill="#c4c49c"/></svg>
<span class="t" style="left:420.10px;top:449.10px;font-size:8.4px;line-height:10.08px;color:#101000;font-weight:normal;transform-origin:0 0;transform:scaleX(0.7264);">Présentes</span>
<svg style="left:0;top:0" width="750" height="600" viewBox="0 0 750 600"><rect x="450.10" y="447.64" width="32.90" height="14.82" fill="#ffff00"/><rect x="450.10" y="447.64" width="0.60" height="14.82" fill="#c4c49c"/><rect x="482.40" y="447.64" width="0.60" height="14.82" fill="#c4c49c"/><rect x="450.10" y="447.64" width="32.90" height="0.60" fill="#c4c49c"/><rect x="450.10" y="461.86" width="32.90" height="0.60" fill="#c4c49c"/></svg>
<span class="t" style="left:452.90px;top:449.10px;font-size:8.4px;line-height:10.08px;color:#101000;font-weight:normal;transform-origin:0 0;transform:scaleX(0.7264);">Présentes</span>
<svg style="left:0;top:0" width="750" height="600" viewBox="0 0 750 600"><rect x="482.80" y="447.09" width="27.00" height="14.82" fill="#ffffff"/><rect x="482.80" y="447.09" width="1.30" height="14.82" fill="#0404cc"/><rect x="508.50" y="447.09" width="1.30" height="14.82" fill="#0404cc"/><rect x="482.80" y="447.09" width="27.00" height="1.30" fill="#0404cc"/><rect x="482.80" y="460.61" width="27.00" height="1.30" fill="#0404cc"/></svg>
<span class="t" style="left:486.45px;top:449.10px;font-size:8.4px;line-height:10.08px;color:#2020c8;font-weight:normal;transform-origin:0 0;transform:scaleX(0.7593);">Absent</span>
<svg style="left:0;top:0" width="750" height="600" viewBox="0 0 750 600"><rect x="509.90" y="447.09" width="52.70" height="14.82" fill="#ffffff"/><rect x="509.90" y="447.09" width="1.30" height="14.82" fill="#0404cc"/><rect x="561.30" y="447.09" width="1.30" height="14.82" fill="#0404cc"/><rect x="509.90" y="447.09" width="52.70" height="1.30" fill="#0404cc"/><rect x="509.90" y="460.61" width="52.70" height="1.30" fill="#0404cc"/></svg>
<span class="t" style="left:519.80px;top:449.10px;font-size:8.4px;line-height:10.08px;color:#2020c8;font-weight:normal;transform-origin:0 0;transform:scaleX(0.7647);">Avec doigts</span>
<svg style="left:0;top:0" width="750" height="600" viewBox="0 0 750 600"><rect x="63.20" y="462.06" width="44.00" height="14.62" fill="#c5c5c5"/><rect x="106.60" y="462.06" width="0.60" height="14.62" fill="#f0f0f0"/><rect x="63.20" y="475.48" width="44.00" height="1.20" fill="#fdfdfd"/><rect x="63.20" y="462.06" width="44.00" height="1.70" fill="#767676"/></svg>
<span class="t" style="left:68.60px;top:463.62px;font-size:8.4px;line-height:10.08px;color:#e02828;font-weight:normal;transform-origin:0 0;transform:scaleX(0.7293);">Caudiptéryx</span>
<svg style="left:0;top:0" width="750" height="600" viewBox="0 0 750 600"><rect x="107.70" y="461.71" width="56.60" height="14.82" fill="#ffffff"/><rect x="107.70" y="461.71" width="1.30" height="14.82" fill="#0404cc"/><rect x="163.00" y="461.71" width="1.30" height="14.82" fill="#0404cc"/><rect x="107.70" y="461.71" width="56.60" height="1.30" fill="#0404cc"/><rect x="107.70" y="475.23" width="56.60" height="1.30" fill="#0404cc"/></svg>
<span class="t" style="left:123.85px;top:463.72px;font-size:8.4px;line-height:10.08px;color:#2020c8;font-weight:normal;transform-origin:0 0;transform:scaleX(0.7380);">Présents</span>
<svg style="left:0;top:0" width="750" height="600" viewBox="0 0 750 600"><rect x="164.30" y="462.26" width="26.70" height="14.82" fill="#ffffff"/><rect x="164.30" y="462.26" width="0.60" height="14.82" fill="#e2e2e2"/><rect x="190.40" y="462.26" width="0.60" height="14.82" fill="#e2e2e2"/><rect x="164.30" y="462.26" width="26.70" height="0.60" fill="#e2e2e2"/><rect x="164.30" y="476.48" width="26.70" height="0.60" fill="#e2e2e2"/></svg>
<span class="t" style="left:175.75px;top:465.06px;font-size:7.0px;line-height:8.40px;color:#484848;font-weight:normal;transform-origin:0 0;transform:scaleX(1.0000);">?</span>
<svg style="left:0;top:0" width="750" height="600" viewBox="0 0 750 600"><rect x="190.90" y="462.26" width="75.90" height="14.82" fill="#ffff00"/><rect x="190.90" y="462.26" width="0.60" height="14.82" fill="#c4c49c"/><rect x="266.20" y="462.26" width="0.60" height="14.82" fill="#c4c49c"/><rect x="190.90" y="462.26" width="75.90" height="0.60" fill="#c4c49c"/><rect x="190.90" y="476.48" width="75.90" height="0.60" fill="#c4c49c"/></svg>
<span class="t" style="left:224.40px;top:463.72px;font-size:8.4px;line-height:10.08px;color:#101000;font-weight:normal;transform-origin:0 0;transform:scaleX(0.6898);">Oui</span>
<svg style="left:0;top:0" width="750" height="600" viewBox="0 0 750 600"><rect x="266.80" y="462.26" width="62.80" height="14.82" fill="#ffff00"/><rect x="266.80" y="462.26" width="0.60" height="14.82" fill="#c4c49c"/><rect x="329.00" y="462.26" width="0.60" height="14.82" fill="#c4c49c"/><rect x="266.80" y="462.26" width="62.80" height="0.60" fill="#c4c49c"/><rect x="266.80" y="476.48" width="62.80" height="0.60" fill="#c4c49c"/></svg>
<span class="t" style="left:285.95px;top:463.72px;font-size:8.4px;line-height:10.08px;color:#101000;font-weight:normal;transform-origin:0 0;transform:scaleX(0.7336);">Présente</span>
<svg style="left:0;top:0" width="750" height="600" viewBox="0 0 750 600"><rect x="329.50" y="462.26" width="26.50" height="14.82" fill="#ffffff"/><rect x="329.50" y="462.26" width="0.60" height="14.82" fill="#e2e2e2"/><rect x="355.40" y="462.26" width="0.60" height="14.82" fill="#e2e2e2"/><rect x="329.50" y="462.26" width="26.50" height="0.60" fill="#e2e2e2"/><rect x="329.50" y="476.48" width="26.50" height="0.60" fill="#e2e2e2"/></svg>
<span class="t" style="left:340.85px;top:465.06px;font-size:7.0px;line-height:8.40px;color:#484848;font-weight:normal;transform-origin:0 0;transform:scaleX(1.0000);">?</span>
<svg style="left:0;top:0" width="750" height="600" viewBox="0 0 750 600"><rect x="355.90" y="462.26" width="61.30" height="14.82" fill="#ffffff"/><rect x="355.90" y="462.26" width="0.60" height="14.82" fill="#e2e2e2"/><rect x="416.60" y="462.26" width="0.60" height="14.82" fill="#e2e2e2"/><rect x="355.90" y="462.26" width="61.30" height="0.60" fill="#e2e2e2"/><rect x="355.90" y="476.48" width="61.30" height="0.60" fill="#e2e2e2"/></svg>
<span class="t" style="left:384.65px;top:465.06px;font-size:7.0px;line-height:8.40px;color:#484848;font-weight:normal;transform-origin:0 0;transform:scaleX(1.0000);">?</span>
<svg style="left:0;top:0" width="750" height="600" viewBox="0 0 750 600"><rect x="417.30" y="462.26" width="32.90" height="14.82" fill="#ffff00"/><rect x="417.30" y="462.26" width="0.60" height="14.82" fill="#c4c49c"/><rect x="449.60" y="462.26" width="0.60" height="14.82" fill="#c4c49c"/><rect x="417.30" y="462.26" width="32.90" height="0.60" fill="#c4c49c"/><rect x="417.30" y="476.48" width="32.90" height="0.60" fill="#c4c49c"/></svg>
<span class="t" style="left:420.10px;top:463.72px;font-size:8.4px;line-height:10.08px;color:#101000;font-weight:normal;transform-origin:0 0;transform:scaleX(0.7264);">Présentes</span>
<svg style="left:0;top:0" width="750" height="600" viewBox="0 0 750 600"><rect x="450.10" y="461.71" width="32.90" height="14.82" fill="#ffffff"/><rect x="450.10" y="461.71" width="1.30" height="14.82" fill="#0404cc"/><rect x="481.70" y="461.71" width="1.30" height="14.82" fill="#0404cc"/><rect x="450.10" y="461.71" width="32.90" height="1.30" fill="#0404cc"/><rect x="450.10" y="475.23" width="32.90" height="1.30" fill="#0404cc"/></svg>
<span class="t" style="left:453.60px;top:463.72px;font-size:8.4px;line-height:10.08px;color:#2020c8;font-weight:normal;transform-origin:0 0;transform:scaleX(0.7445);">Absentes</span>
<svg style="left:0;top:0" width="750" height="600" viewBox="0 0 750 600"><rect x="482.80" y="461.71" width="27.00" height="14.82" fill="#ffffff"/><rect x="482.80" y="461.71" width="1.30" height="14.82" fill="#0404cc"/><rect x="508.50" y="461.71" width="1.30" height="14.82" fill="#0404cc"/><rect x="482.80" y="461.71" width="27.00" height="1.30" fill="#0404cc"/><rect x="482.80" y="475.23" width="27.00" height="1.30" fill="#0404cc"/></svg>
<span class="t" style="left:486.45px;top:463.72px;font-size:8.4px;line-height:10.08px;color:#2020c8;font-weight:normal;transform-origin:0 0;transform:scaleX(0.7593);">Absent</span>
<svg style="left:0;top:0" width="750" height="600" viewBox="0 0 750 600"><rect x="509.90" y="461.71" width="52.70" height="14.82" fill="#ffffff"/><rect x="509.90" y="461.71" width="1.30" height="14.82" fill="#0404cc"/><rect x="561.30" y="461.71" width="1.30" height="14.82" fill="#0404cc"/><rect x="509.90" y="461.71" width="52.70" height="1.30" fill="#0404cc"/><rect x="509.90" y="475.23" width="52.70" height="1.30" fill="#0404cc"/></svg>
<span class="t" style="left:519.80px;top:463.72px;font-size:8.4px;line-height:10.08px;color:#2020c8;font-weight:normal;transform-origin:0 0;transform:scaleX(0.7647);">Avec doigts</span>
<svg style="left:0;top:0" width="750" height="600" viewBox="0 0 750 600"><rect x="63.20" y="476.68" width="44.00" height="14.62" fill="#c5c5c5"/><rect x="106.60" y="476.68" width="0.60" height="14.62" fill="#f0f0f0"/><rect x="63.20" y="490.10" width="44.00" height="1.20" fill="#fdfdfd"/><rect x="63.20" y="476.68" width="44.00" height="1.70" fill="#767676"/></svg>
<span class="t" style="left:71.60px;top:478.24px;font-size:8.4px;line-height:10.08px;color:#202020;font-weight:normal;transform-origin:0 0;transform:scaleX(0.7516);">Crocodile</span>
<svg style="left:0;top:0" width="750" height="600" viewBox="0 0 750 600"><rect x="107.70" y="476.33" width="56.60" height="14.82" fill="#ffffff"/><rect x="107.70" y="476.33" width="1.30" height="14.82" fill="#0404cc"/><rect x="163.00" y="476.33" width="1.30" height="14.82" fill="#0404cc"/><rect x="107.70" y="476.33" width="56.60" height="1.30" fill="#0404cc"/><rect x="107.70" y="489.85" width="56.60" height="1.30" fill="#0404cc"/></svg>
<span class="t" style="left:123.85px;top:478.34px;font-size:8.4px;line-height:10.08px;color:#2020c8;font-weight:normal;transform-origin:0 0;transform:scaleX(0.7380);">Présents</span>
<svg style="left:0;top:0" width="750" height="600" viewBox="0 0 750 600"><rect x="164.30" y="476.33" width="26.70" height="14.82" fill="#ffffff"/><rect x="164.30" y="476.33" width="1.30" height="14.82" fill="#0404cc"/><rect x="189.70" y="476.33" width="1.30" height="14.82" fill="#0404cc"/><rect x="164.30" y="476.33" width="26.70" height="1.30" fill="#0404cc"/><rect x="164.30" y="489.85" width="26.70" height="1.30" fill="#0404cc"/></svg>
<span class="t" style="left:167.00px;top:478.34px;font-size:8.4px;line-height:10.08px;color:#2020c8;font-weight:normal;transform-origin:0 0;transform:scaleX(0.7411);">Présent</span>
<svg style="left:0;top:0" width="750" height="600" viewBox="0 0 750 600"><rect x="190.90" y="476.88" width="75.90" height="14.82" fill="#ffff00"/><rect x="190.90" y="476.88" width="0.60" height="14.82" fill="#c4c49c"/><rect x="266.20" y="476.88" width="0.60" height="14.82" fill="#c4c49c"/><rect x="190.90" y="476.88" width="75.90" height="0.60" fill="#c4c49c"/><rect x="190.90" y="491.10" width="75.90" height="0.60" fill="#c4c49c"/></svg>
<span class="t" style="left:224.40px;top:478.34px;font-size:8.4px;line-height:10.08px;color:#101000;font-weight:normal;transform-origin:0 0;transform:scaleX(0.6898);">Oui</span>
<svg style="left:0;top:0" width="750" height="600" viewBox="0 0 750 600"><rect x="266.80" y="476.88" width="62.80" height="14.82" fill="#ffff00"/><rect x="266.80" y="476.88" width="0.60" height="14.82" fill="#c4c49c"/><rect x="329.00" y="476.88" width="0.60" height="14.82" fill="#c4c49c"/><rect x="266.80" y="476.88" width="62.80" height="0.60" fill="#c4c49c"/><rect x="266.80" y="491.10" width="62.80" height="0.60" fill="#c4c49c"/></svg>
<span class="t" style="left:285.95px;top:478.34px;font-size:8.4px;line-height:10.08px;color:#101000;font-weight:normal;transform-origin:0 0;transform:scaleX(0.7336);">Présente</span>
<svg style="left:0;top:0" width="750" height="600" viewBox="0 0 750 600"><rect x="329.50" y="476.88" width="26.50" height="14.82" fill="#ffff00"/><rect x="329.50" y="476.88" width="0.60" height="14.82" fill="#c4c49c"/><rect x="355.40" y="476.88" width="0.60" height="14.82" fill="#c4c49c"/><rect x="329.50" y="476.88" width="26.50" height="0.60" fill="#c4c49c"/><rect x="329.50" y="491.10" width="26.50" height="0.60" fill="#c4c49c"/></svg>
<span class="t" style="left:332.10px;top:478.34px;font-size:8.4px;line-height:10.08px;color:#101000;font-weight:normal;transform-origin:0 0;transform:scaleX(0.7411);">Présent</span>
<svg style="left:0;top:0" width="750" height="600" viewBox="0 0 750 600"><rect x="355.90" y="476.88" width="61.30" height="14.82" fill="#ffff00"/><rect x="355.90" y="476.88" width="0.60" height="14.82" fill="#c4c49c"/><rect x="416.60" y="476.88" width="0.60" height="14.82" fill="#c4c49c"/><rect x="355.90" y="476.88" width="61.30" height="0.60" fill="#c4c49c"/><rect x="355.90" y="491.10" width="61.30" height="0.60" fill="#c4c49c"/></svg>
<span class="t" style="left:374.30px;top:478.34px;font-size:8.4px;line-height:10.08px;color:#101000;font-weight:normal;transform-origin:0 0;transform:scaleX(0.7336);">Présente</span>
<svg style="left:0;top:0" width="750" height="600" viewBox="0 0 750 600"><rect x="417.30" y="476.33" width="32.90" height="14.82" fill="#ffffff"/><rect x="417.30" y="476.33" width="1.30" height="14.82" fill="#0404cc"/><rect x="448.90" y="476.33" width="1.30" height="14.82" fill="#0404cc"/><rect x="417.30" y="476.33" width="32.90" height="1.30" fill="#0404cc"/><rect x="417.30" y="489.85" width="32.90" height="1.30" fill="#0404cc"/></svg>
<span class="t" style="left:420.80px;top:478.34px;font-size:8.4px;line-height:10.08px;color:#2020c8;font-weight:normal;transform-origin:0 0;transform:scaleX(0.7445);">Absentes</span>
<svg style="left:0;top:0" width="750" height="600" viewBox="0 0 750 600"><rect x="450.10" y="476.33" width="32.90" height="14.82" fill="#ffffff"/><rect x="450.10" y="476.33" width="1.30" height="14.82" fill="#0404cc"/><rect x="481.70" y="476.33" width="1.30" height="14.82" fill="#0404cc"/><rect x="450.10" y="476.33" width="32.90" height="1.30" fill="#0404cc"/><rect x="450.10" y="489.85" width="32.90" height="1.30" fill="#0404cc"/></svg>
<span class="t" style="left:453.60px;top:478.34px;font-size:8.4px;line-height:10.08px;color:#2020c8;font-weight:normal;transform-origin:0 0;transform:scaleX(0.7445);">Absentes</span>
<svg style="left:0;top:0" width="750" height="600" viewBox="0 0 750 600"><rect x="482.80" y="476.33" width="27.00" height="14.82" fill="#ffffff"/><rect x="482.80" y="476.33" width="1.30" height="14.82" fill="#0404cc"/><rect x="508.50" y="476.33" width="1.30" height="14.82" fill="#0404cc"/><rect x="482.80" y="476.33" width="27.00" height="1.30" fill="#0404cc"/><rect x="482.80" y="489.85" width="27.00" height="1.30" fill="#0404cc"/></svg>
<span class="t" style="left:486.45px;top:478.34px;font-size:8.4px;line-height:10.08px;color:#2020c8;font-weight:normal;transform-origin:0 0;transform:scaleX(0.7593);">Absent</span>
<svg style="left:0;top:0" width="750" height="600" viewBox="0 0 750 600"><rect x="509.90" y="476.33" width="52.70" height="14.82" fill="#ffffff"/><rect x="509.90" y="476.33" width="1.30" height="14.82" fill="#0404cc"/><rect x="561.30" y="476.33" width="1.30" height="14.82" fill="#0404cc"/><rect x="509.90" y="476.33" width="52.70" height="1.30" fill="#0404cc"/><rect x="509.90" y="489.85" width="52.70" height="1.30" fill="#0404cc"/></svg>
<span class="t" style="left:519.80px;top:478.34px;font-size:8.4px;line-height:10.08px;color:#2020c8;font-weight:normal;transform-origin:0 0;transform:scaleX(0.7647);">Avec doigts</span>
<svg style="left:0;top:0" width="750" height="600" viewBox="0 0 750 600"><rect x="63.20" y="491.30" width="44.00" height="14.62" fill="#c5c5c5"/><rect x="106.60" y="491.30" width="0.60" height="14.62" fill="#f0f0f0"/><rect x="63.20" y="504.72" width="44.00" height="1.20" fill="#fdfdfd"/><rect x="63.20" y="491.30" width="44.00" height="1.70" fill="#767676"/></svg>
<span class="t" style="left:79.50px;top:492.86px;font-size:8.4px;line-height:10.08px;color:#202020;font-weight:normal;transform-origin:0 0;transform:scaleX(0.7245);">Boa</span>
<svg style="left:0;top:0" width="750" height="600" viewBox="0 0 750 600"><rect x="107.70" y="490.95" width="56.60" height="14.82" fill="#ffffff"/><rect x="107.70" y="490.95" width="1.30" height="14.82" fill="#0404cc"/><rect x="163.00" y="490.95" width="1.30" height="14.82" fill="#0404cc"/><rect x="107.70" y="490.95" width="56.60" height="1.30" fill="#0404cc"/><rect x="107.70" y="504.47" width="56.60" height="1.30" fill="#0404cc"/></svg>
<span class="t" style="left:123.85px;top:492.96px;font-size:8.4px;line-height:10.08px;color:#2020c8;font-weight:normal;transform-origin:0 0;transform:scaleX(0.7380);">Présents</span>
<svg style="left:0;top:0" width="750" height="600" viewBox="0 0 750 600"><rect x="164.30" y="490.95" width="26.70" height="14.82" fill="#ffffff"/><rect x="164.30" y="490.95" width="1.30" height="14.82" fill="#0404cc"/><rect x="189.70" y="490.95" width="1.30" height="14.82" fill="#0404cc"/><rect x="164.30" y="490.95" width="26.70" height="1.30" fill="#0404cc"/><rect x="164.30" y="504.47" width="26.70" height="1.30" fill="#0404cc"/></svg>
<span class="t" style="left:167.00px;top:492.96px;font-size:8.4px;line-height:10.08px;color:#2020c8;font-weight:normal;transform-origin:0 0;transform:scaleX(0.7411);">Présent</span>
<svg style="left:0;top:0" width="750" height="600" viewBox="0 0 750 600"><rect x="190.90" y="491.50" width="75.90" height="14.82" fill="#ffff00"/><rect x="190.90" y="491.50" width="0.60" height="14.82" fill="#c4c49c"/><rect x="266.20" y="491.50" width="0.60" height="14.82" fill="#c4c49c"/><rect x="190.90" y="491.50" width="75.90" height="0.60" fill="#c4c49c"/><rect x="190.90" y="505.72" width="75.90" height="0.60" fill="#c4c49c"/></svg>
<span class="t" style="left:224.40px;top:492.96px;font-size:8.4px;line-height:10.08px;color:#101000;font-weight:normal;transform-origin:0 0;transform:scaleX(0.6898);">Oui</span>
<svg style="left:0;top:0" width="750" height="600" viewBox="0 0 750 600"><rect x="266.80" y="490.95" width="62.80" height="14.82" fill="#ffffff"/><rect x="266.80" y="490.95" width="1.30" height="14.82" fill="#0404cc"/><rect x="328.30" y="490.95" width="1.30" height="14.82" fill="#0404cc"/><rect x="266.80" y="490.95" width="62.80" height="1.30" fill="#0404cc"/><rect x="266.80" y="504.47" width="62.80" height="1.30" fill="#0404cc"/></svg>
<span class="t" style="left:286.75px;top:492.96px;font-size:8.4px;line-height:10.08px;color:#2020c8;font-weight:normal;transform-origin:0 0;transform:scaleX(0.7483);">Absente</span>
<svg style="left:0;top:0" width="750" height="600" viewBox="0 0 750 600"><rect x="329.50" y="490.95" width="26.50" height="14.82" fill="#ffffff"/><rect x="329.50" y="490.95" width="1.30" height="14.82" fill="#0404cc"/><rect x="354.70" y="490.95" width="1.30" height="14.82" fill="#0404cc"/><rect x="329.50" y="490.95" width="26.50" height="1.30" fill="#0404cc"/><rect x="329.50" y="504.47" width="26.50" height="1.30" fill="#0404cc"/></svg>
<span class="t" style="left:332.90px;top:492.96px;font-size:8.4px;line-height:10.08px;color:#2020c8;font-weight:normal;transform-origin:0 0;transform:scaleX(0.7593);">Absent</span>
<svg style="left:0;top:0" width="750" height="600" viewBox="0 0 750 600"><rect x="355.90" y="490.95" width="61.30" height="14.82" fill="#ffffff"/><rect x="355.90" y="490.95" width="1.30" height="14.82" fill="#0404cc"/><rect x="415.90" y="490.95" width="1.30" height="14.82" fill="#0404cc"/><rect x="355.90" y="490.95" width="61.30" height="1.30" fill="#0404cc"/><rect x="355.90" y="504.47" width="61.30" height="1.30" fill="#0404cc"/></svg>
<span class="t" style="left:375.10px;top:492.96px;font-size:8.4px;line-height:10.08px;color:#2020c8;font-weight:normal;transform-origin:0 0;transform:scaleX(0.7483);">Absente</span>
<svg style="left:0;top:0" width="750" height="600" viewBox="0 0 750 600"><rect x="417.30" y="490.95" width="32.90" height="14.82" fill="#ffffff"/><rect x="417.30" y="490.95" width="1.30" height="14.82" fill="#0404cc"/><rect x="448.90" y="490.95" width="1.30" height="14.82" fill="#0404cc"/><rect x="417.30" y="490.95" width="32.90" height="1.30" fill="#0404cc"/><rect x="417.30" y="504.47" width="32.90" height="1.30" fill="#0404cc"/></svg>
<span class="t" style="left:420.80px;top:492.96px;font-size:8.4px;line-height:10.08px;color:#2020c8;font-weight:normal;transform-origin:0 0;transform:scaleX(0.7445);">Absentes</span>
<svg style="left:0;top:0" width="750" height="600" viewBox="0 0 750 600"><rect x="450.10" y="490.95" width="32.90" height="14.82" fill="#ffffff"/><rect x="450.10" y="490.95" width="1.30" height="14.82" fill="#0404cc"/><rect x="481.70" y="490.95" width="1.30" height="14.82" fill="#0404cc"/><rect x="450.10" y="490.95" width="32.90" height="1.30" fill="#0404cc"/><rect x="450.10" y="504.47" width="32.90" height="1.30" fill="#0404cc"/></svg>
<span class="t" style="left:453.60px;top:492.96px;font-size:8.4px;line-height:10.08px;color:#2020c8;font-weight:normal;transform-origin:0 0;transform:scaleX(0.7445);">Absentes</span>
<svg style="left:0;top:0" width="750" height="600" viewBox="0 0 750 600"><rect x="482.80" y="490.95" width="27.00" height="14.82" fill="#ffffff"/><rect x="482.80" y="490.95" width="1.30" height="14.82" fill="#0404cc"/><rect x="508.50" y="490.95" width="1.30" height="14.82" fill="#0404cc"/><rect x="482.80" y="490.95" width="27.00" height="1.30" fill="#0404cc"/><rect x="482.80" y="504.47" width="27.00" height="1.30" fill="#0404cc"/></svg>
<span class="t" style="left:486.45px;top:492.96px;font-size:8.4px;line-height:10.08px;color:#2020c8;font-weight:normal;transform-origin:0 0;transform:scaleX(0.7593);">Absent</span>
<svg style="left:0;top:0" width="750" height="600" viewBox="0 0 750 600"><rect x="509.90" y="491.50" width="52.70" height="14.82" fill="#ffff00"/><rect x="509.90" y="491.50" width="0.60" height="14.82" fill="#c4c49c"/><rect x="562.00" y="491.50" width="0.60" height="14.82" fill="#c4c49c"/><rect x="509.90" y="491.50" width="52.70" height="0.60" fill="#c4c49c"/><rect x="509.90" y="505.72" width="52.70" height="0.60" fill="#c4c49c"/></svg>
<span class="t" style="left:525.00px;top:492.96px;font-size:8.4px;line-height:10.08px;color:#101000;font-weight:normal;transform-origin:0 0;transform:scaleX(0.7467);">Absents</span>
<svg style="left:0;top:0" width="750" height="600" viewBox="0 0 750 600"><rect x="63.20" y="505.92" width="44.00" height="14.62" fill="#c5c5c5"/><rect x="106.60" y="505.92" width="0.60" height="14.62" fill="#f0f0f0"/><rect x="63.20" y="519.34" width="44.00" height="1.20" fill="#fdfdfd"/><rect x="63.20" y="505.92" width="44.00" height="1.70" fill="#767676"/></svg>
<span class="t" style="left:76.30px;top:507.48px;font-size:8.4px;line-height:10.08px;color:#202020;font-weight:normal;transform-origin:0 0;transform:scaleX(0.7148);">Vipère</span>
<svg style="left:0;top:0" width="750" height="600" viewBox="0 0 750 600"><rect x="107.70" y="505.57" width="56.60" height="14.82" fill="#ffffff"/><rect x="107.70" y="505.57" width="1.30" height="14.82" fill="#0404cc"/><rect x="163.00" y="505.57" width="1.30" height="14.82" fill="#0404cc"/><rect x="107.70" y="505.57" width="56.60" height="1.30" fill="#0404cc"/><rect x="107.70" y="519.09" width="56.60" height="1.30" fill="#0404cc"/></svg>
<span class="t" style="left:123.85px;top:507.58px;font-size:8.4px;line-height:10.08px;color:#2020c8;font-weight:normal;transform-origin:0 0;transform:scaleX(0.7380);">Présents</span>
<svg style="left:0;top:0" width="750" height="600" viewBox="0 0 750 600"><rect x="164.30" y="505.57" width="26.70" height="14.82" fill="#ffffff"/><rect x="164.30" y="505.57" width="1.30" height="14.82" fill="#0404cc"/><rect x="189.70" y="505.57" width="1.30" height="14.82" fill="#0404cc"/><rect x="164.30" y="505.57" width="26.70" height="1.30" fill="#0404cc"/><rect x="164.30" y="519.09" width="26.70" height="1.30" fill="#0404cc"/></svg>
<span class="t" style="left:167.00px;top:507.58px;font-size:8.4px;line-height:10.08px;color:#2020c8;font-weight:normal;transform-origin:0 0;transform:scaleX(0.7411);">Présent</span>
<svg style="left:0;top:0" width="750" height="600" viewBox="0 0 750 600"><rect x="190.90" y="506.12" width="75.90" height="14.82" fill="#ffff00"/><rect x="190.90" y="506.12" width="0.60" height="14.82" fill="#c4c49c"/><rect x="266.20" y="506.12" width="0.60" height="14.82" fill="#c4c49c"/><rect x="190.90" y="506.12" width="75.90" height="0.60" fill="#c4c49c"/><rect x="190.90" y="520.34" width="75.90" height="0.60" fill="#c4c49c"/></svg>
<span class="t" style="left:224.40px;top:507.58px;font-size:8.4px;line-height:10.08px;color:#101000;font-weight:normal;transform-origin:0 0;transform:scaleX(0.6898);">Oui</span>
<svg style="left:0;top:0" width="750" height="600" viewBox="0 0 750 600"><rect x="266.80" y="505.57" width="62.80" height="14.82" fill="#ffffff"/><rect x="266.80" y="505.57" width="1.30" height="14.82" fill="#0404cc"/><rect x="328.30" y="505.57" width="1.30" height="14.82" fill="#0404cc"/><rect x="266.80" y="505.57" width="62.80" height="1.30" fill="#0404cc"/><rect x="266.80" y="519.09" width="62.80" height="1.30" fill="#0404cc"/></svg>
<span class="t" style="left:286.75px;top:507.58px;font-size:8.4px;line-height:10.08px;color:#2020c8;font-weight:normal;transform-origin:0 0;transform:scaleX(0.7483);">Absente</span>
<svg style="left:0;top:0" width="750" height="600" viewBox="0 0 750 600"><rect x="329.50" y="505.57" width="26.50" height="14.82" fill="#ffffff"/><rect x="329.50" y="505.57" width="1.30" height="14.82" fill="#0404cc"/><rect x="354.70" y="505.57" width="1.30" height="14.82" fill="#0404cc"/><rect x="329.50" y="505.57" width="26.50" height="1.30" fill="#0404cc"/><rect x="329.50" y="519.09" width="26.50" height="1.30" fill="#0404cc"/></svg>
<span class="t" style="left:332.90px;top:507.58px;font-size:8.4px;line-height:10.08px;color:#2020c8;font-weight:normal;transform-origin:0 0;transform:scaleX(0.7593);">Absent</span>
<svg style="left:0;top:0" width="750" height="600" viewBox="0 0 750 600"><rect x="355.90" y="505.57" width="61.30" height="14.82" fill="#ffffff"/><rect x="355.90" y="505.57" width="1.30" height="14.82" fill="#0404cc"/><rect x="415.90" y="505.57" width="1.30" height="14.82" fill="#0404cc"/><rect x="355.90" y="505.57" width="61.30" height="1.30" fill="#0404cc"/><rect x="355.90" y="519.09" width="61.30" height="1.30" fill="#0404cc"/></svg>
<span class="t" style="left:375.10px;top:507.58px;font-size:8.4px;line-height:10.08px;color:#2020c8;font-weight:normal;transform-origin:0 0;transform:scaleX(0.7483);">Absente</span>
<svg style="left:0;top:0" width="750" height="600" viewBox="0 0 750 600"><rect x="417.30" y="505.57" width="32.90" height="14.82" fill="#ffffff"/><rect x="417.30" y="505.57" width="1.30" height="14.82" fill="#0404cc"/><rect x="448.90" y="505.57" width="1.30" height="14.82" fill="#0404cc"/><rect x="417.30" y="505.57" width="32.90" height="1.30" fill="#0404cc"/><rect x="417.30" y="519.09" width="32.90" height="1.30" fill="#0404cc"/></svg>
<span class="t" style="left:420.80px;top:507.58px;font-size:8.4px;line-height:10.08px;color:#2020c8;font-weight:normal;transform-origin:0 0;transform:scaleX(0.7445);">Absentes</span>
<svg style="left:0;top:0" width="750" height="600" viewBox="0 0 750 600"><rect x="450.10" y="505.57" width="32.90" height="14.82" fill="#ffffff"/><rect x="450.10" y="505.57" width="1.30" height="14.82" fill="#0404cc"/><rect x="481.70" y="505.57" width="1.30" height="14.82" fill="#0404cc"/><rect x="450.10" y="505.57" width="32.90" height="1.30" fill="#0404cc"/><rect x="450.10" y="519.09" width="32.90" height="1.30" fill="#0404cc"/></svg>
<span class="t" style="left:453.60px;top:507.58px;font-size:8.4px;line-height:10.08px;color:#2020c8;font-weight:normal;transform-origin:0 0;transform:scaleX(0.7445);">Absentes</span>
<svg style="left:0;top:0" width="750" height="600" viewBox="0 0 750 600"><rect x="482.80" y="505.57" width="27.00" height="14.82" fill="#ffffff"/><rect x="482.80" y="505.57" width="1.30" height="14.82" fill="#0404cc"/><rect x="508.50" y="505.57" width="1.30" height="14.82" fill="#0404cc"/><rect x="482.80" y="505.57" width="27.00" height="1.30" fill="#0404cc"/><rect x="482.80" y="519.09" width="27.00" height="1.30" fill="#0404cc"/></svg>
<span class="t" style="left:486.45px;top:507.58px;font-size:8.4px;line-height:10.08px;color:#2020c8;font-weight:normal;transform-origin:0 0;transform:scaleX(0.7593);">Absent</span>
<svg style="left:0;top:0" width="750" height="600" viewBox="0 0 750 600"><rect x="509.90" y="506.12" width="52.70" height="14.82" fill="#ffff00"/><rect x="509.90" y="506.12" width="0.60" height="14.82" fill="#c4c49c"/><rect x="562.00" y="506.12" width="0.60" height="14.82" fill="#c4c49c"/><rect x="509.90" y="506.12" width="52.70" height="0.60" fill="#c4c49c"/><rect x="509.90" y="520.34" width="52.70" height="0.60" fill="#c4c49c"/></svg>
<span class="t" style="left:525.00px;top:507.58px;font-size:8.4px;line-height:10.08px;color:#101000;font-weight:normal;transform-origin:0 0;transform:scaleX(0.7467);">Absents</span>
<svg style="left:0;top:0" width="750" height="600" viewBox="0 0 750 600"><rect x="63.20" y="520.54" width="44.00" height="14.62" fill="#c5c5c5"/><rect x="106.60" y="520.54" width="0.60" height="14.62" fill="#f0f0f0"/><rect x="63.20" y="533.96" width="44.00" height="1.20" fill="#fdfdfd"/><rect x="63.20" y="520.54" width="44.00" height="1.70" fill="#767676"/></svg>
<span class="t" style="left:71.10px;top:522.10px;font-size:8.4px;line-height:10.08px;color:#202020;font-weight:normal;transform-origin:0 0;transform:scaleX(0.7227);">Caméléon</span>
<svg style="left:0;top:0" width="750" height="600" viewBox="0 0 750 600"><rect x="107.70" y="520.19" width="56.60" height="14.82" fill="#ffffff"/><rect x="107.70" y="520.19" width="1.30" height="14.82" fill="#0404cc"/><rect x="163.00" y="520.19" width="1.30" height="14.82" fill="#0404cc"/><rect x="107.70" y="520.19" width="56.60" height="1.30" fill="#0404cc"/><rect x="107.70" y="533.71" width="56.60" height="1.30" fill="#0404cc"/></svg>
<span class="t" style="left:123.85px;top:522.20px;font-size:8.4px;line-height:10.08px;color:#2020c8;font-weight:normal;transform-origin:0 0;transform:scaleX(0.7380);">Présents</span>
<svg style="left:0;top:0" width="750" height="600" viewBox="0 0 750 600"><rect x="164.30" y="520.19" width="26.70" height="14.82" fill="#ffffff"/><rect x="164.30" y="520.19" width="1.30" height="14.82" fill="#0404cc"/><rect x="189.70" y="520.19" width="1.30" height="14.82" fill="#0404cc"/><rect x="164.30" y="520.19" width="26.70" height="1.30" fill="#0404cc"/><rect x="164.30" y="533.71" width="26.70" height="1.30" fill="#0404cc"/></svg>
<span class="t" style="left:167.00px;top:522.20px;font-size:8.4px;line-height:10.08px;color:#2020c8;font-weight:normal;transform-origin:0 0;transform:scaleX(0.7411);">Présent</span>
<svg style="left:0;top:0" width="750" height="600" viewBox="0 0 750 600"><rect x="190.90" y="520.74" width="75.90" height="14.82" fill="#ffff00"/><rect x="190.90" y="520.74" width="0.60" height="14.82" fill="#c4c49c"/><rect x="266.20" y="520.74" width="0.60" height="14.82" fill="#c4c49c"/><rect x="190.90" y="520.74" width="75.90" height="0.60" fill="#c4c49c"/><rect x="190.90" y="534.96" width="75.90" height="0.60" fill="#c4c49c"/></svg>
<span class="t" style="left:224.40px;top:522.20px;font-size:8.4px;line-height:10.08px;color:#101000;font-weight:normal;transform-origin:0 0;transform:scaleX(0.6898);">Oui</span>
<svg style="left:0;top:0" width="750" height="600" viewBox="0 0 750 600"><rect x="266.80" y="520.19" width="62.80" height="14.82" fill="#ffffff"/><rect x="266.80" y="520.19" width="1.30" height="14.82" fill="#0404cc"/><rect x="328.30" y="520.19" width="1.30" height="14.82" fill="#0404cc"/><rect x="266.80" y="520.19" width="62.80" height="1.30" fill="#0404cc"/><rect x="266.80" y="533.71" width="62.80" height="1.30" fill="#0404cc"/></svg>
<span class="t" style="left:286.75px;top:522.20px;font-size:8.4px;line-height:10.08px;color:#2020c8;font-weight:normal;transform-origin:0 0;transform:scaleX(0.7483);">Absente</span>
<svg style="left:0;top:0" width="750" height="600" viewBox="0 0 750 600"><rect x="329.50" y="520.19" width="26.50" height="14.82" fill="#ffffff"/><rect x="329.50" y="520.19" width="1.30" height="14.82" fill="#0404cc"/><rect x="354.70" y="520.19" width="1.30" height="14.82" fill="#0404cc"/><rect x="329.50" y="520.19" width="26.50" height="1.30" fill="#0404cc"/><rect x="329.50" y="533.71" width="26.50" height="1.30" fill="#0404cc"/></svg>
<span class="t" style="left:332.90px;top:522.20px;font-size:8.4px;line-height:10.08px;color:#2020c8;font-weight:normal;transform-origin:0 0;transform:scaleX(0.7593);">Absent</span>
<svg style="left:0;top:0" width="750" height="600" viewBox="0 0 750 600"><rect x="355.90" y="520.19" width="61.30" height="14.82" fill="#ffffff"/><rect x="355.90" y="520.19" width="1.30" height="14.82" fill="#0404cc"/><rect x="415.90" y="520.19" width="1.30" height="14.82" fill="#0404cc"/><rect x="355.90" y="520.19" width="61.30" height="1.30" fill="#0404cc"/><rect x="355.90" y="533.71" width="61.30" height="1.30" fill="#0404cc"/></svg>
<span class="t" style="left:375.10px;top:522.20px;font-size:8.4px;line-height:10.08px;color:#2020c8;font-weight:normal;transform-origin:0 0;transform:scaleX(0.7483);">Absente</span>
<svg style="left:0;top:0" width="750" height="600" viewBox="0 0 750 600"><rect x="417.30" y="520.19" width="32.90" height="14.82" fill="#ffffff"/><rect x="417.30" y="520.19" width="1.30" height="14.82" fill="#0404cc"/><rect x="448.90" y="520.19" width="1.30" height="14.82" fill="#0404cc"/><rect x="417.30" y="520.19" width="32.90" height="1.30" fill="#0404cc"/><rect x="417.30" y="533.71" width="32.90" height="1.30" fill="#0404cc"/></svg>
<span class="t" style="left:420.80px;top:522.20px;font-size:8.4px;line-height:10.08px;color:#2020c8;font-weight:normal;transform-origin:0 0;transform:scaleX(0.7445);">Absentes</span>
<svg style="left:0;top:0" width="750" height="600" viewBox="0 0 750 600"><rect x="450.10" y="520.19" width="32.90" height="14.82" fill="#ffffff"/><rect x="450.10" y="520.19" width="1.30" height="14.82" fill="#0404cc"/><rect x="481.70" y="520.19" width="1.30" height="14.82" fill="#0404cc"/><rect x="450.10" y="520.19" width="32.90" height="1.30" fill="#0404cc"/><rect x="450.10" y="533.71" width="32.90" height="1.30" fill="#0404cc"/></svg>
<span class="t" style="left:453.60px;top:522.20px;font-size:8.4px;line-height:10.08px;color:#2020c8;font-weight:normal;transform-origin:0 0;transform:scaleX(0.7445);">Absentes</span>
<svg style="left:0;top:0" width="750" height="600" viewBox="0 0 750 600"><rect x="482.80" y="520.19" width="27.00" height="14.82" fill="#ffffff"/><rect x="482.80" y="520.19" width="1.30" height="14.82" fill="#0404cc"/><rect x="508.50" y="520.19" width="1.30" height="14.82" fill="#0404cc"/><rect x="482.80" y="520.19" width="27.00" height="1.30" fill="#0404cc"/><rect x="482.80" y="533.71" width="27.00" height="1.30" fill="#0404cc"/></svg>
<span class="t" style="left:486.45px;top:522.20px;font-size:8.4px;line-height:10.08px;color:#2020c8;font-weight:normal;transform-origin:0 0;transform:scaleX(0.7593);">Absent</span>
<svg style="left:0;top:0" width="750" height="600" viewBox="0 0 750 600"><rect x="509.90" y="520.19" width="52.70" height="14.82" fill="#ffffff"/><rect x="509.90" y="520.19" width="1.30" height="14.82" fill="#0404cc"/><rect x="561.30" y="520.19" width="1.30" height="14.82" fill="#0404cc"/><rect x="509.90" y="520.19" width="52.70" height="1.30" fill="#0404cc"/><rect x="509.90" y="533.71" width="52.70" height="1.30" fill="#0404cc"/></svg>
<span class="t" style="left:519.80px;top:522.20px;font-size:8.4px;line-height:10.08px;color:#2020c8;font-weight:normal;transform-origin:0 0;transform:scaleX(0.7647);">Avec doigts</span>
<svg style="left:0;top:0" width="750" height="600" viewBox="0 0 750 600"><rect x="63.20" y="535.16" width="44.00" height="14.62" fill="#c5c5c5"/><rect x="106.60" y="535.16" width="0.60" height="14.62" fill="#f0f0f0"/><rect x="63.20" y="548.58" width="44.00" height="1.20" fill="#fdfdfd"/><rect x="63.20" y="535.16" width="44.00" height="1.70" fill="#767676"/></svg>
<span class="t" style="left:75.40px;top:536.72px;font-size:8.4px;line-height:10.08px;color:#202020;font-weight:normal;transform-origin:0 0;transform:scaleX(0.7419);">Lézard</span>
<svg style="left:0;top:0" width="750" height="600" viewBox="0 0 750 600"><rect x="107.70" y="534.81" width="56.60" height="14.82" fill="#ffffff"/><rect x="107.70" y="534.81" width="1.30" height="14.82" fill="#0404cc"/><rect x="163.00" y="534.81" width="1.30" height="14.82" fill="#0404cc"/><rect x="107.70" y="534.81" width="56.60" height="1.30" fill="#0404cc"/><rect x="107.70" y="548.33" width="56.60" height="1.30" fill="#0404cc"/></svg>
<span class="t" style="left:123.85px;top:536.82px;font-size:8.4px;line-height:10.08px;color:#2020c8;font-weight:normal;transform-origin:0 0;transform:scaleX(0.7380);">Présents</span>
<svg style="left:0;top:0" width="750" height="600" viewBox="0 0 750 600"><rect x="164.30" y="534.81" width="26.70" height="14.82" fill="#ffffff"/><rect x="164.30" y="534.81" width="1.30" height="14.82" fill="#0404cc"/><rect x="189.70" y="534.81" width="1.30" height="14.82" fill="#0404cc"/><rect x="164.30" y="534.81" width="26.70" height="1.30" fill="#0404cc"/><rect x="164.30" y="548.33" width="26.70" height="1.30" fill="#0404cc"/></svg>
<span class="t" style="left:167.00px;top:536.82px;font-size:8.4px;line-height:10.08px;color:#2020c8;font-weight:normal;transform-origin:0 0;transform:scaleX(0.7411);">Présent</span>
<svg style="left:0;top:0" width="750" height="600" viewBox="0 0 750 600"><rect x="190.90" y="535.36" width="75.90" height="14.82" fill="#ffff00"/><rect x="190.90" y="535.36" width="0.60" height="14.82" fill="#c4c49c"/><rect x="266.20" y="535.36" width="0.60" height="14.82" fill="#c4c49c"/><rect x="190.90" y="535.36" width="75.90" height="0.60" fill="#c4c49c"/><rect x="190.90" y="549.58" width="75.90" height="0.60" fill="#c4c49c"/></svg>
<span class="t" style="left:224.40px;top:536.82px;font-size:8.4px;line-height:10.08px;color:#101000;font-weight:normal;transform-origin:0 0;transform:scaleX(0.6898);">Oui</span>
<svg style="left:0;top:0" width="750" height="600" viewBox="0 0 750 600"><rect x="266.80" y="534.81" width="62.80" height="14.82" fill="#ffffff"/><rect x="266.80" y="534.81" width="1.30" height="14.82" fill="#0404cc"/><rect x="328.30" y="534.81" width="1.30" height="14.82" fill="#0404cc"/><rect x="266.80" y="534.81" width="62.80" height="1.30" fill="#0404cc"/><rect x="266.80" y="548.33" width="62.80" height="1.30" fill="#0404cc"/></svg>
<span class="t" style="left:286.75px;top:536.82px;font-size:8.4px;line-height:10.08px;color:#2020c8;font-weight:normal;transform-origin:0 0;transform:scaleX(0.7483);">Absente</span>
<svg style="left:0;top:0" width="750" height="600" viewBox="0 0 750 600"><rect x="329.50" y="534.81" width="26.50" height="14.82" fill="#ffffff"/><rect x="329.50" y="534.81" width="1.30" height="14.82" fill="#0404cc"/><rect x="354.70" y="534.81" width="1.30" height="14.82" fill="#0404cc"/><rect x="329.50" y="534.81" width="26.50" height="1.30" fill="#0404cc"/><rect x="329.50" y="548.33" width="26.50" height="1.30" fill="#0404cc"/></svg>
<span class="t" style="left:332.90px;top:536.82px;font-size:8.4px;line-height:10.08px;color:#2020c8;font-weight:normal;transform-origin:0 0;transform:scaleX(0.7593);">Absent</span>
<svg style="left:0;top:0" width="750" height="600" viewBox="0 0 750 600"><rect x="355.90" y="534.81" width="61.30" height="14.82" fill="#ffffff"/><rect x="355.90" y="534.81" width="1.30" height="14.82" fill="#0404cc"/><rect x="415.90" y="534.81" width="1.30" height="14.82" fill="#0404cc"/><rect x="355.90" y="534.81" width="61.30" height="1.30" fill="#0404cc"/><rect x="355.90" y="548.33" width="61.30" height="1.30" fill="#0404cc"/></svg>
<span class="t" style="left:375.10px;top:536.82px;font-size:8.4px;line-height:10.08px;color:#2020c8;font-weight:normal;transform-origin:0 0;transform:scaleX(0.7483);">Absente</span>
<svg style="left:0;top:0" width="750" height="600" viewBox="0 0 750 600"><rect x="417.30" y="534.81" width="32.90" height="14.82" fill="#ffffff"/><rect x="417.30" y="534.81" width="1.30" height="14.82" fill="#0404cc"/><rect x="448.90" y="534.81" width="1.30" height="14.82" fill="#0404cc"/><rect x="417.30" y="534.81" width="32.90" height="1.30" fill="#0404cc"/><rect x="417.30" y="548.33" width="32.90" height="1.30" fill="#0404cc"/></svg>
<span class="t" style="left:420.80px;top:536.82px;font-size:8.4px;line-height:10.08px;color:#2020c8;font-weight:normal;transform-origin:0 0;transform:scaleX(0.7445);">Absentes</span>
<svg style="left:0;top:0" width="750" height="600" viewBox="0 0 750 600"><rect x="450.10" y="534.81" width="32.90" height="14.82" fill="#ffffff"/><rect x="450.10" y="534.81" width="1.30" height="14.82" fill="#0404cc"/><rect x="481.70" y="534.81" width="1.30" height="14.82" fill="#0404cc"/><rect x="450.10" y="534.81" width="32.90" height="1.30" fill="#0404cc"/><rect x="450.10" y="548.33" width="32.90" height="1.30" fill="#0404cc"/></svg>
<span class="t" style="left:453.60px;top:536.82px;font-size:8.4px;line-height:10.08px;color:#2020c8;font-weight:normal;transform-origin:0 0;transform:scaleX(0.7445);">Absentes</span>
<svg style="left:0;top:0" width="750" height="600" viewBox="0 0 750 600"><rect x="482.80" y="534.81" width="27.00" height="14.82" fill="#ffffff"/><rect x="482.80" y="534.81" width="1.30" height="14.82" fill="#0404cc"/><rect x="508.50" y="534.81" width="1.30" height="14.82" fill="#0404cc"/><rect x="482.80" y="534.81" width="27.00" height="1.30" fill="#0404cc"/><rect x="482.80" y="548.33" width="27.00" height="1.30" fill="#0404cc"/></svg>
<span class="t" style="left:486.45px;top:536.82px;font-size:8.4px;line-height:10.08px;color:#2020c8;font-weight:normal;transform-origin:0 0;transform:scaleX(0.7593);">Absent</span>
<svg style="left:0;top:0" width="750" height="600" viewBox="0 0 750 600"><rect x="509.90" y="534.81" width="52.70" height="14.82" fill="#ffffff"/><rect x="509.90" y="534.81" width="1.30" height="14.82" fill="#0404cc"/><rect x="561.30" y="534.81" width="1.30" height="14.82" fill="#0404cc"/><rect x="509.90" y="534.81" width="52.70" height="1.30" fill="#0404cc"/><rect x="509.90" y="548.33" width="52.70" height="1.30" fill="#0404cc"/></svg>
<span class="t" style="left:519.80px;top:536.82px;font-size:8.4px;line-height:10.08px;color:#2020c8;font-weight:normal;transform-origin:0 0;transform:scaleX(0.7647);">Avec doigts</span>
<svg style="left:0;top:0" width="750" height="600" viewBox="0 0 750 600"><rect x="63.20" y="549.78" width="44.00" height="14.62" fill="#c5c5c5"/><rect x="106.60" y="549.78" width="0.60" height="14.62" fill="#f0f0f0"/><rect x="63.20" y="563.20" width="44.00" height="1.20" fill="#fdfdfd"/><rect x="63.20" y="549.78" width="44.00" height="1.70" fill="#767676"/></svg>
<span class="t" style="left:74.20px;top:551.34px;font-size:8.4px;line-height:10.08px;color:#2828d0;font-weight:normal;transform-origin:0 0;transform:scaleX(0.7297);">Homme</span>
<svg style="left:0;top:0" width="750" height="600" viewBox="0 0 750 600"><rect x="107.70" y="549.43" width="56.60" height="14.82" fill="#ffffff"/><rect x="107.70" y="549.43" width="1.30" height="14.82" fill="#0404cc"/><rect x="163.00" y="549.43" width="1.30" height="14.82" fill="#0404cc"/><rect x="107.70" y="549.43" width="56.60" height="1.30" fill="#0404cc"/><rect x="107.70" y="562.95" width="56.60" height="1.30" fill="#0404cc"/></svg>
<span class="t" style="left:123.85px;top:551.44px;font-size:8.4px;line-height:10.08px;color:#2020c8;font-weight:normal;transform-origin:0 0;transform:scaleX(0.7380);">Présents</span>
<svg style="left:0;top:0" width="750" height="600" viewBox="0 0 750 600"><rect x="164.30" y="549.43" width="26.70" height="14.82" fill="#ffffff"/><rect x="164.30" y="549.43" width="1.30" height="14.82" fill="#0404cc"/><rect x="189.70" y="549.43" width="1.30" height="14.82" fill="#0404cc"/><rect x="164.30" y="549.43" width="26.70" height="1.30" fill="#0404cc"/><rect x="164.30" y="562.95" width="26.70" height="1.30" fill="#0404cc"/></svg>
<span class="t" style="left:167.00px;top:551.44px;font-size:8.4px;line-height:10.08px;color:#2020c8;font-weight:normal;transform-origin:0 0;transform:scaleX(0.7411);">Présent</span>
<svg style="left:0;top:0" width="750" height="600" viewBox="0 0 750 600"><rect x="190.90" y="549.43" width="75.90" height="14.82" fill="#ffffff"/><rect x="190.90" y="549.43" width="1.30" height="14.82" fill="#0404cc"/><rect x="265.50" y="549.43" width="1.30" height="14.82" fill="#0404cc"/><rect x="190.90" y="549.43" width="75.90" height="1.30" fill="#0404cc"/><rect x="190.90" y="562.95" width="75.90" height="1.30" fill="#0404cc"/></svg>
<span class="t" style="left:223.70px;top:551.44px;font-size:8.4px;line-height:10.08px;color:#2020c8;font-weight:normal;transform-origin:0 0;transform:scaleX(0.6764);">Non</span>
<svg style="left:0;top:0" width="750" height="600" viewBox="0 0 750 600"><rect x="266.80" y="549.43" width="62.80" height="14.82" fill="#ffffff"/><rect x="266.80" y="549.43" width="1.30" height="14.82" fill="#0404cc"/><rect x="328.30" y="549.43" width="1.30" height="14.82" fill="#0404cc"/><rect x="266.80" y="549.43" width="62.80" height="1.30" fill="#0404cc"/><rect x="266.80" y="562.95" width="62.80" height="1.30" fill="#0404cc"/></svg>
<span class="t" style="left:286.75px;top:551.44px;font-size:8.4px;line-height:10.08px;color:#2020c8;font-weight:normal;transform-origin:0 0;transform:scaleX(0.7483);">Absente</span>
<svg style="left:0;top:0" width="750" height="600" viewBox="0 0 750 600"><rect x="329.50" y="549.43" width="26.50" height="14.82" fill="#ffffff"/><rect x="329.50" y="549.43" width="1.30" height="14.82" fill="#0404cc"/><rect x="354.70" y="549.43" width="1.30" height="14.82" fill="#0404cc"/><rect x="329.50" y="549.43" width="26.50" height="1.30" fill="#0404cc"/><rect x="329.50" y="562.95" width="26.50" height="1.30" fill="#0404cc"/></svg>
<span class="t" style="left:332.90px;top:551.44px;font-size:8.4px;line-height:10.08px;color:#2020c8;font-weight:normal;transform-origin:0 0;transform:scaleX(0.7593);">Absent</span>
<svg style="left:0;top:0" width="750" height="600" viewBox="0 0 750 600"><rect x="355.90" y="549.43" width="61.30" height="14.82" fill="#ffffff"/><rect x="355.90" y="549.43" width="1.30" height="14.82" fill="#0404cc"/><rect x="415.90" y="549.43" width="1.30" height="14.82" fill="#0404cc"/><rect x="355.90" y="549.43" width="61.30" height="1.30" fill="#0404cc"/><rect x="355.90" y="562.95" width="61.30" height="1.30" fill="#0404cc"/></svg>
<span class="t" style="left:375.10px;top:551.44px;font-size:8.4px;line-height:10.08px;color:#2020c8;font-weight:normal;transform-origin:0 0;transform:scaleX(0.7483);">Absente</span>
<svg style="left:0;top:0" width="750" height="600" viewBox="0 0 750 600"><rect x="417.30" y="549.43" width="32.90" height="14.82" fill="#ffffff"/><rect x="417.30" y="549.43" width="1.30" height="14.82" fill="#0404cc"/><rect x="448.90" y="549.43" width="1.30" height="14.82" fill="#0404cc"/><rect x="417.30" y="549.43" width="32.90" height="1.30" fill="#0404cc"/><rect x="417.30" y="562.95" width="32.90" height="1.30" fill="#0404cc"/></svg>
<span class="t" style="left:420.80px;top:551.44px;font-size:8.4px;line-height:10.08px;color:#2020c8;font-weight:normal;transform-origin:0 0;transform:scaleX(0.7445);">Absentes</span>
<svg style="left:0;top:0" width="750" height="600" viewBox="0 0 750 600"><rect x="450.10" y="549.43" width="32.90" height="14.82" fill="#ffffff"/><rect x="450.10" y="549.43" width="1.30" height="14.82" fill="#0404cc"/><rect x="481.70" y="549.43" width="1.30" height="14.82" fill="#0404cc"/><rect x="450.10" y="549.43" width="32.90" height="1.30" fill="#0404cc"/><rect x="450.10" y="562.95" width="32.90" height="1.30" fill="#0404cc"/></svg>
<span class="t" style="left:453.60px;top:551.44px;font-size:8.4px;line-height:10.08px;color:#2020c8;font-weight:normal;transform-origin:0 0;transform:scaleX(0.7445);">Absentes</span>
<svg style="left:0;top:0" width="750" height="600" viewBox="0 0 750 600"><rect x="482.80" y="549.43" width="27.00" height="14.82" fill="#ffffff"/><rect x="482.80" y="549.43" width="1.30" height="14.82" fill="#0404cc"/><rect x="508.50" y="549.43" width="1.30" height="14.82" fill="#0404cc"/><rect x="482.80" y="549.43" width="27.00" height="1.30" fill="#0404cc"/><rect x="482.80" y="562.95" width="27.00" height="1.30" fill="#0404cc"/></svg>
<span class="t" style="left:486.45px;top:551.44px;font-size:8.4px;line-height:10.08px;color:#2020c8;font-weight:normal;transform-origin:0 0;transform:scaleX(0.7593);">Absent</span>
<svg style="left:0;top:0" width="750" height="600" viewBox="0 0 750 600"><rect x="509.90" y="549.43" width="52.70" height="14.82" fill="#ffffff"/><rect x="509.90" y="549.43" width="1.30" height="14.82" fill="#0404cc"/><rect x="561.30" y="549.43" width="1.30" height="14.82" fill="#0404cc"/><rect x="509.90" y="549.43" width="52.70" height="1.30" fill="#0404cc"/><rect x="509.90" y="562.95" width="52.70" height="1.30" fill="#0404cc"/></svg>
<span class="t" style="left:519.80px;top:551.44px;font-size:8.4px;line-height:10.08px;color:#2020c8;font-weight:normal;transform-origin:0 0;transform:scaleX(0.7647);">Avec doigts</span>
<svg style="left:0;top:0" width="750" height="600" viewBox="0 0 750 600"><rect x="0.00" y="579.00" width="750.00" height="1.80" fill="#e6eeec"/><rect x="0.00" y="580.70" width="750.00" height="1.40" fill="#467e7c"/><rect x="0.00" y="582.10" width="750.00" height="0.90" fill="#7cb0aa"/><rect x="0.00" y="583.00" width="750.00" height="17.00" fill="#d4d0c8"/><rect x="0.00" y="583.00" width="750.00" height="1.00" fill="#d6ece6"/><rect x="1.60" y="584.80" width="45.00" height="13.00" fill="#d4d0c8"/><rect x="45.60" y="584.80" width="1.00" height="13.00" fill="#505050"/><rect x="1.60" y="596.80" width="45.00" height="1.00" fill="#505050"/><rect x="1.60" y="584.80" width="1.00" height="13.00" fill="#fff"/><rect x="1.60" y="584.80" width="45.00" height="1.00" fill="#fff"/></svg>
<svg style="left:3px;top:586.4px" width="9" height="9.6" viewBox="0 0 9 9.6"><path d="M1.4 1.6 Q2.8 0.6 4.2 1.6 L3.6 4.6 Q2.2 3.8 0.8 4.6 Z" fill="#e04830"/><path d="M4.8 1.8 Q6.2 2.8 7.8 1.8 L7.2 4.8 Q5.6 5.6 4.2 4.8 Z" fill="#40a838"/><path d="M0.6 5.2 Q2 4.4 3.4 5.2 L2.8 8.2 Q1.4 7.4 0 8.2 Z" fill="#3868d8"/><path d="M4 5.4 Q5.4 6.2 7 5.4 L6.4 8.4 Q4.8 9.2 3.4 8.4 Z" fill="#e8b820"/></svg>
<span class="t" style="left:13.00px;top:587.00px;font-size:8.0px;line-height:9.60px;color:#000;font-weight:bold;transform-origin:0 0;transform:scaleX(0.8994);">Démarrer</span>
<svg style="left:0;top:0" width="750" height="600" viewBox="0 0 750 600"><rect x="51.60" y="585.40" width="0.80" height="12.00" fill="#8c8880"/><rect x="52.40" y="585.40" width="0.80" height="12.00" fill="#fff"/></svg>
<svg style="left:55px;top:585.6px" width="122" height="12.4" viewBox="0 0 122 12.4"><rect x="1.8" y="1.6" width="7.8" height="8.8" rx="1.2" fill="#4c8cdc"/><rect x="3.2" y="2.8" width="5" height="6.4" fill="#e4f0fc"/><path d="M6.8 3.8 Q4.6 3.8 4.6 6 Q4.6 8.2 6.8 8.2" stroke="#2c64c0" stroke-width="1" fill="none"/><rect x="8.4" y="3" width="1.2" height="5" fill="#2c4c9c"/><circle cx="20" cy="6" r="4.6" fill="#e87818"/><circle cx="20.6" cy="5.2" r="2.4" fill="#3858b8"/><path d="M15.6 6 Q17 9.6 20.6 9.8 Q23.6 9.4 24.4 6.6 Q22.4 8.4 20 8 Q17.4 7.6 16.6 4.6 Z" fill="#f0a020"/><circle cx="33.4" cy="6.4" r="4.6" fill="#3a3aa8"/><rect x="30.6" y="5.2" width="5.4" height="3.4" fill="#f0f0f0"/><path d="M30.6 5.2 L33.3 7.2 L36 5.2" stroke="#c0a040" stroke-width="0.6" fill="none"/><path d="M29.4 4 Q33 1 37.4 4" stroke="#90b0f0" stroke-width="1" fill="none"/><circle cx="47.8" cy="6.6" r="3.8" fill="#3890e0"/><circle cx="47.8" cy="6.6" r="1.5" fill="#d8ecfc"/><rect x="45.6" y="6.2" width="5" height="1" fill="#d8ecfc"/><path d="M43.4 9.6 Q46 3.6 52.6 2" stroke="#e8c020" stroke-width="1" fill="none"/><path d="M56 1.6 H65.2 L61 5.4 L64.6 9.6 L62.6 10.8 L59.4 6.8 L56 10.6 Z" fill="#1838c8"/><path d="M59.6 3 L64 8.6" stroke="#f4f4f4" stroke-width="1.3"/><path d="M62 9.4 L65 10.6" stroke="#404040" stroke-width="1.2"/><path d="M69.4 1.8 H78.6 L78.6 5 L72.6 10.8 L69.4 10.8 Z" fill="#1838c8"/><path d="M72.8 3.8 L77 2 L79.8 7.2 L75.4 9.4 Z" fill="#f8f8f8" stroke="#505050" stroke-width="0.6"/><rect x="82.6" y="1.6" width="9.2" height="9.2" fill="#3a4630"/><path d="M82.6 4.6 H91.8 M82.6 7.6 H91.8 M85.6 1.6 V10.8 M88.6 1.6 V10.8" stroke="#8c9844" stroke-width="0.7"/><path d="M84 3 L90.6 10" stroke="#d0d040" stroke-width="1.1"/><rect x="86" y="2" width="3" height="2.4" fill="#c0c8a0"/><circle cx="101.2" cy="6.4" r="3.9" fill="#48a0e8"/><circle cx="101.2" cy="6.4" r="1.7" fill="#e8f4fc"/><rect x="101.6" y="6.8" width="2.6" height="2.2" fill="#e8f4fc"/><circle cx="114.2" cy="6.4" r="4.5" fill="#9aa4bc"/><circle cx="114.2" cy="6.4" r="3.7" fill="#4c5c9c"/><circle cx="114.2" cy="6.4" r="2.7" fill="#f0f2f8"/><path d="M113.2 4.8 L116.2 6.4 L113.2 8 Z" fill="#182c98"/></svg>
<svg style="left:0;top:0" width="750" height="600" viewBox="0 0 750 600"><rect x="201.40" y="585.40" width="0.80" height="12.00" fill="#8c8880"/><rect x="202.20" y="585.40" width="0.80" height="12.00" fill="#fff"/><rect x="205.00" y="585.00" width="93.40" height="12.60" fill="#d4d0c8"/><rect x="297.40" y="585.00" width="1.00" height="12.60" fill="#505050"/><rect x="205.00" y="596.60" width="93.40" height="1.00" fill="#505050"/><rect x="205.00" y="585.00" width="1.00" height="12.60" fill="#fff"/><rect x="205.00" y="585.00" width="93.40" height="1.00" fill="#fff"/></svg>
<svg style="left:207.6px;top:586px" width="10.4" height="10.4" viewBox="0 0 10.4 10.4"><circle cx="5.2" cy="5.2" r="4.6" fill="#e87818"/><circle cx="5.8" cy="4.4" r="2.4" fill="#3858b8"/><path d="M0.8 5.2 Q2.2 8.8 5.8 9 Q8.8 8.6 9.6 5.8 Q7.6 7.6 5.2 7.2 Q2.6 6.8 1.8 3.8 Z" fill="#f0a020"/></svg>
<span class="t" style="left:219.20px;top:586.70px;font-size:8.0px;line-height:9.60px;color:#000;font-weight:normal;transform-origin:0 0;transform:scaleX(0.8092);">Lire et comprendre les ar...</span>
<svg style="left:0;top:0" width="750" height="600" viewBox="0 0 750 600"><rect x="301.40" y="585.00" width="92.40" height="12.60" fill="#d4d0c8"/><rect x="392.80" y="585.00" width="1.00" height="12.60" fill="#505050"/><rect x="301.40" y="596.60" width="92.40" height="1.00" fill="#505050"/><rect x="301.40" y="585.00" width="1.00" height="12.60" fill="#fff"/><rect x="301.40" y="585.00" width="92.40" height="1.00" fill="#fff"/></svg>
<svg style="left:303.4px;top:586.6px" width="9.4" height="9" viewBox="0 0 9.4 9"><path d="M0.6 2 H3.6 L4.4 3 H8.6 V8 H0.6 Z" fill="#e8d070" stroke="#a08828" stroke-width="0.6"/><path d="M1.4 4 H8 V7.4 H1.4 Z" fill="#f8f0b8"/></svg>
<span class="t" style="left:315.00px;top:586.70px;font-size:8.0px;line-height:9.60px;color:#000;font-weight:normal;transform-origin:0 0;transform:scaleX(0.7468);">Programmes</span>
<svg style="left:0;top:0" width="750" height="600" viewBox="0 0 750 600"><rect x="396.60" y="584.80" width="94.40" height="13.00" fill="#ecebe6"/><rect x="490.00" y="584.80" width="1.00" height="13.00" fill="#fff"/><rect x="396.60" y="596.80" width="94.40" height="1.00" fill="#fff"/><rect x="396.60" y="584.80" width="1.00" height="13.00" fill="#505050"/><rect x="396.60" y="584.80" width="94.40" height="1.20" fill="#505050"/></svg>
<svg style="left:399.6px;top:586.4px" width="9.4" height="9.6" viewBox="0 0 9.4 9.6"><rect x="0.4" y="0.6" width="8.6" height="8.6" fill="#58984c"/><rect x="1" y="1" width="3" height="3" fill="#c8dcb8"/><rect x="5" y="2" width="3.2" height="2.6" fill="#d8e8c8"/><rect x="2" y="5.6" width="4" height="3" fill="#386830"/><rect x="6.4" y="5.6" width="2" height="2" fill="#b0cca0"/></svg>
<span class="t" style="left:410.80px;top:587.30px;font-size:8.0px;line-height:9.60px;color:#000;font-weight:bold;transform-origin:0 0;transform:scaleX(0.8539);">Phylo</span>
<svg style="left:0;top:0" width="750" height="600" viewBox="0 0 750 600"><rect x="610.80" y="585.40" width="0.80" height="12.00" fill="#8c8880"/><rect x="611.60" y="585.40" width="0.80" height="12.00" fill="#fff"/><rect x="616.40" y="587.00" width="9.80" height="8.60" fill="#1c2c70"/></svg>
<span class="t" style="left:617.60px;top:587.30px;font-size:7px;line-height:8.40px;color:#fff;font-weight:bold;transform-origin:0 0;transform:scaleX(0.7920);">FR</span>
<svg style="left:0;top:0" width="750" height="600" viewBox="0 0 750 600"><rect x="638.20" y="584.60" width="110.40" height="14.20" fill="#d4d0c8"/><rect x="747.60" y="584.60" width="1.00" height="14.20" fill="#fff"/><rect x="638.20" y="597.80" width="110.40" height="1.00" fill="#fff"/><rect x="638.20" y="584.60" width="1.00" height="14.20" fill="#8a867e"/><rect x="638.20" y="584.60" width="110.40" height="1.00" fill="#8a867e"/></svg>
<svg style="left:640px;top:585.4px" width="86" height="11.6" viewBox="0 0 86 11.6"><rect x="1.4" y="3" width="4.6" height="4" fill="#5870a0"/><rect x="2.6" y="7.6" width="3.4" height="2" fill="#404858"/><rect x="6.4" y="1.6" width="2.4" height="3.4" fill="#a8b0c0"/><rect x="11.4" y="2.6" width="4.4" height="4" fill="#3848a0"/><rect x="14" y="1.4" width="4.2" height="4" fill="#5868b8"/><rect x="12" y="7" width="3.4" height="2.6" fill="#606880"/><path d="M15.6 6.8 L19.6 10.4 M19.6 6.8 L15.6 10.4" stroke="#e81818" stroke-width="1.3"/><circle cx="24.4" cy="3.8" r="2.2" fill="#f0e020" stroke="#a09010" stroke-width="0.5"/><path d="M25.6 5.4 L29.6 9.6" stroke="#e8d818" stroke-width="1.8"/><circle cx="29" cy="2.8" r="1.9" fill="#e82020"/><path d="M32.8 2.4 H40.8 L36.8 9.4 Z" fill="#1828c0"/><path d="M34.6 3.8 H39 L36.8 7.4 Z" fill="#6078e8"/><rect x="43.4" y="1.6" width="8.4" height="7.6" fill="#c8d0e0" stroke="#283880" stroke-width="1.2"/><rect x="44.6" y="9.4" width="6" height="1" fill="#283880"/><ellipse cx="57.6" cy="4.4" rx="3.8" ry="2.8" fill="#f4f4f4" stroke="#888" stroke-width="0.6"/><path d="M55.6 4.4 Q57.6 2.6 59.6 4.4" stroke="#888" stroke-width="0.6" fill="none"/><path d="M57.6 6.6 L61.4 10.2 M61.4 6.6 L57.6 10.2" stroke="#e81818" stroke-width="1.3"/><rect x="65.4" y="1.4" width="7" height="6" fill="#707888"/><rect x="66.6" y="2.4" width="4.6" height="3.6" fill="#a8b0c8"/><circle cx="66" cy="8.4" r="2" fill="#e02020"/><path d="M79.4 2.6 V8.4 M76.6 9.6 H82.4" stroke="#585858" stroke-width="0.9"/><path d="M78 3.6 L79.4 1.6 L80.8 3.6 Z" fill="#585858"/></svg>
<span class="t" style="left:727.40px;top:586.80px;font-size:8.0px;line-height:9.60px;color:#000;font-weight:normal;transform-origin:0 0;transform:scaleX(0.8387);">17:40</span>
</div></body></html>
